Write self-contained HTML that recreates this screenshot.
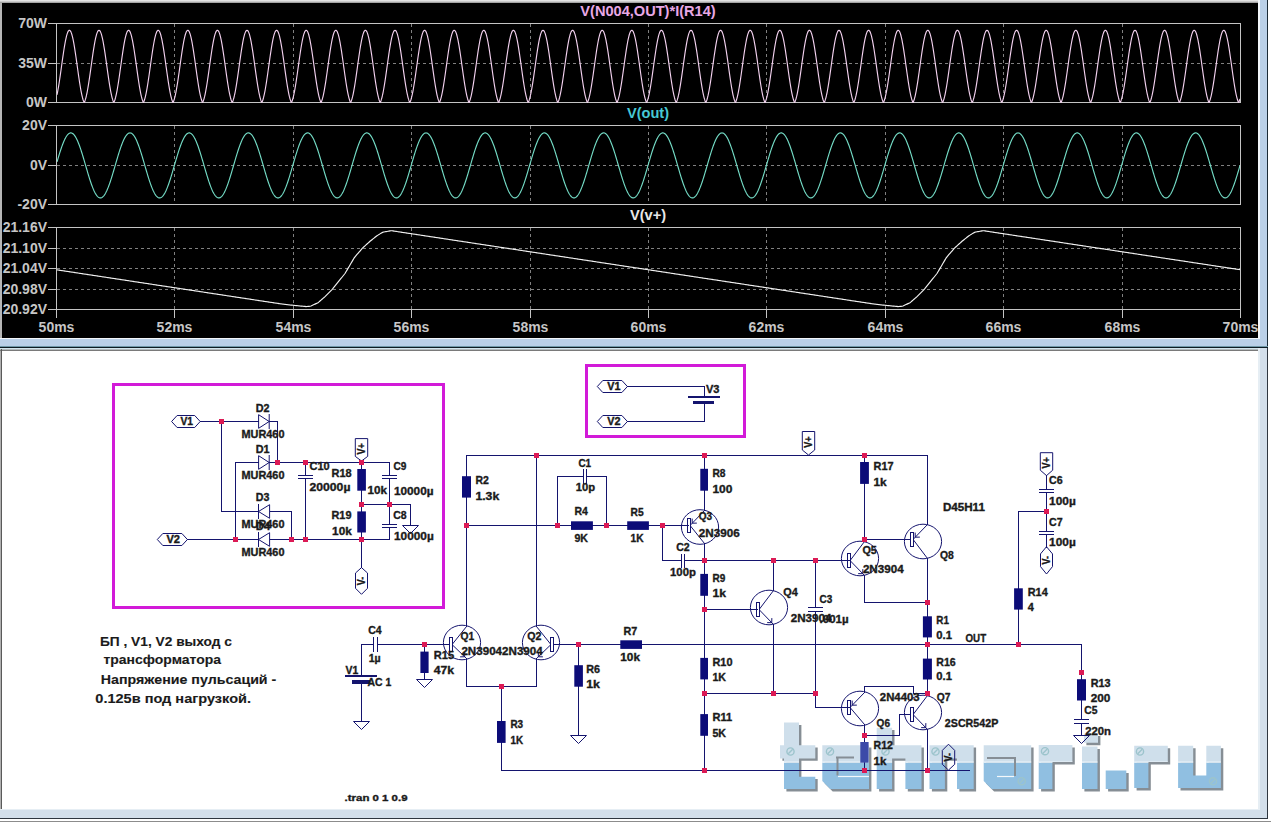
<!DOCTYPE html><html><head><meta charset="utf-8"><style>html,body{margin:0;padding:0;width:1271px;height:822px;overflow:hidden;background:#fff}svg{display:block;position:absolute;left:0;top:0;z-index:5;font-family:"Liberation Sans",sans-serif;font-weight:bold}</style></head><body>
<svg width="1271" height="822" viewBox="0 0 1271 822" shape-rendering="auto">
<rect x="0" y="0" width="1271" height="822" fill="#ffffff"/>
<rect x="0" y="0" width="1258" height="1" fill="#e2e2e2"/>
<rect x="0" y="1" width="1258" height="1" fill="#c9c9c9"/>
<rect x="0" y="2" width="1258" height="1" fill="#a4a4a4"/>
<rect x="0" y="3" width="2" height="335" fill="#b6b6b6"/>
<rect x="2" y="3" width="1256" height="335" fill="#000000"/>
<rect x="1258" y="0" width="2" height="348" fill="#f2f6fa"/>
<rect x="1260" y="0" width="7" height="348" fill="#bad0e8"/>
<rect x="1267" y="0" width="1" height="348" fill="#1a2a36"/>
<rect x="0" y="338" width="1260" height="1" fill="#f2f6fa"/>
<rect x="0" y="339" width="1267" height="7" fill="#bad0e8"/>
<rect x="0" y="346" width="1268" height="1" fill="#6f98a8"/>
<rect x="0" y="347" width="1268" height="1" fill="#0e1c24"/>
<rect x="0" y="348" width="1258" height="1" fill="#d2e6ee"/>
<rect x="0" y="349" width="1258" height="1" fill="#b4babd"/>
<rect x="0" y="350" width="1258" height="1" fill="#7a7a7a"/>
<rect x="0" y="351" width="1" height="458" fill="#b0b0b0"/>
<rect x="1" y="349" width="1" height="460" fill="#5a5a5a"/>
<rect x="1258" y="348" width="2" height="462" fill="#e6eef4"/>
<rect x="1260" y="348" width="7" height="470" fill="#d3dfeb"/>
<rect x="1267" y="348" width="1" height="471" fill="#2e3640"/>
<rect x="0" y="809" width="1260" height="1" fill="#e6eef4"/>
<rect x="0" y="810" width="1267" height="8" fill="#d3dfeb"/>
<rect x="0" y="818" width="1268" height="1" fill="#2e3640"/>
<rect x="0" y="821" width="1271" height="1" fill="#8c8c8c"/>
<line x1="57" y1="63.5" x2="1240" y2="63.5" stroke="#808080" stroke-width="1" stroke-dasharray="3 3"/>
<line x1="174.5" y1="24" x2="174.5" y2="102" stroke="#808080" stroke-width="1" stroke-dasharray="3 3"/>
<line x1="293.5" y1="24" x2="293.5" y2="102" stroke="#808080" stroke-width="1" stroke-dasharray="3 3"/>
<line x1="411.5" y1="24" x2="411.5" y2="102" stroke="#808080" stroke-width="1" stroke-dasharray="3 3"/>
<line x1="530.5" y1="24" x2="530.5" y2="102" stroke="#808080" stroke-width="1" stroke-dasharray="3 3"/>
<line x1="648.5" y1="24" x2="648.5" y2="102" stroke="#808080" stroke-width="1" stroke-dasharray="3 3"/>
<line x1="766.5" y1="24" x2="766.5" y2="102" stroke="#808080" stroke-width="1" stroke-dasharray="3 3"/>
<line x1="885.5" y1="24" x2="885.5" y2="102" stroke="#808080" stroke-width="1" stroke-dasharray="3 3"/>
<line x1="1003.5" y1="24" x2="1003.5" y2="102" stroke="#808080" stroke-width="1" stroke-dasharray="3 3"/>
<line x1="1122.5" y1="24" x2="1122.5" y2="102" stroke="#808080" stroke-width="1" stroke-dasharray="3 3"/>
<rect x="56" y="23" width="1185" height="1" fill="#c4c4c4"/>
<rect x="56" y="102" width="1185" height="1" fill="#c4c4c4"/>
<rect x="56" y="23" width="1" height="80" fill="#c4c4c4"/>
<rect x="1240" y="23" width="1" height="80" fill="#c4c4c4"/>
<rect x="48" y="23" width="8" height="1" fill="#c4c4c4"/>
<text transform="translate(47,28.3) scale(1,1.09)" font-size="14" fill="#c6c6c6" text-anchor="end">70W</text>
<rect x="48" y="63" width="8" height="1" fill="#c4c4c4"/>
<text transform="translate(47,68.3) scale(1,1.09)" font-size="14" fill="#c6c6c6" text-anchor="end">35W</text>
<rect x="48" y="102" width="8" height="1" fill="#c4c4c4"/>
<text transform="translate(47,107.3) scale(1,1.09)" font-size="14" fill="#c6c6c6" text-anchor="end">0W</text>
<text x="648" y="16" font-size="14.6" fill="#e8a8e6" text-anchor="middle">V(N004,OUT)*I(R14)</text>
<line x1="57" y1="165.5" x2="1240" y2="165.5" stroke="#808080" stroke-width="1" stroke-dasharray="3 3"/>
<line x1="174.5" y1="126" x2="174.5" y2="204" stroke="#808080" stroke-width="1" stroke-dasharray="3 3"/>
<line x1="293.5" y1="126" x2="293.5" y2="204" stroke="#808080" stroke-width="1" stroke-dasharray="3 3"/>
<line x1="411.5" y1="126" x2="411.5" y2="204" stroke="#808080" stroke-width="1" stroke-dasharray="3 3"/>
<line x1="530.5" y1="126" x2="530.5" y2="204" stroke="#808080" stroke-width="1" stroke-dasharray="3 3"/>
<line x1="648.5" y1="126" x2="648.5" y2="204" stroke="#808080" stroke-width="1" stroke-dasharray="3 3"/>
<line x1="766.5" y1="126" x2="766.5" y2="204" stroke="#808080" stroke-width="1" stroke-dasharray="3 3"/>
<line x1="885.5" y1="126" x2="885.5" y2="204" stroke="#808080" stroke-width="1" stroke-dasharray="3 3"/>
<line x1="1003.5" y1="126" x2="1003.5" y2="204" stroke="#808080" stroke-width="1" stroke-dasharray="3 3"/>
<line x1="1122.5" y1="126" x2="1122.5" y2="204" stroke="#808080" stroke-width="1" stroke-dasharray="3 3"/>
<rect x="56" y="125" width="1185" height="1" fill="#c4c4c4"/>
<rect x="56" y="204" width="1185" height="1" fill="#c4c4c4"/>
<rect x="56" y="125" width="1" height="80" fill="#c4c4c4"/>
<rect x="1240" y="125" width="1" height="80" fill="#c4c4c4"/>
<rect x="48" y="125" width="8" height="1" fill="#c4c4c4"/>
<text transform="translate(47,130.3) scale(1,1.09)" font-size="14" fill="#c6c6c6" text-anchor="end">20V</text>
<rect x="48" y="165" width="8" height="1" fill="#c4c4c4"/>
<text transform="translate(47,170.3) scale(1,1.09)" font-size="14" fill="#c6c6c6" text-anchor="end">0V</text>
<rect x="48" y="204" width="8" height="1" fill="#c4c4c4"/>
<text transform="translate(47,209.3) scale(1,1.09)" font-size="14" fill="#c6c6c6" text-anchor="end">-20V</text>
<text x="648" y="118" font-size="14.6" fill="#46c8d4" text-anchor="middle">V(out)</text>
<line x1="57" y1="248.5" x2="1240" y2="248.5" stroke="#808080" stroke-width="1" stroke-dasharray="3 3"/>
<line x1="57" y1="268.5" x2="1240" y2="268.5" stroke="#808080" stroke-width="1" stroke-dasharray="3 3"/>
<line x1="57" y1="289.5" x2="1240" y2="289.5" stroke="#808080" stroke-width="1" stroke-dasharray="3 3"/>
<line x1="174.5" y1="228" x2="174.5" y2="309" stroke="#808080" stroke-width="1" stroke-dasharray="3 3"/>
<line x1="293.5" y1="228" x2="293.5" y2="309" stroke="#808080" stroke-width="1" stroke-dasharray="3 3"/>
<line x1="411.5" y1="228" x2="411.5" y2="309" stroke="#808080" stroke-width="1" stroke-dasharray="3 3"/>
<line x1="530.5" y1="228" x2="530.5" y2="309" stroke="#808080" stroke-width="1" stroke-dasharray="3 3"/>
<line x1="648.5" y1="228" x2="648.5" y2="309" stroke="#808080" stroke-width="1" stroke-dasharray="3 3"/>
<line x1="766.5" y1="228" x2="766.5" y2="309" stroke="#808080" stroke-width="1" stroke-dasharray="3 3"/>
<line x1="885.5" y1="228" x2="885.5" y2="309" stroke="#808080" stroke-width="1" stroke-dasharray="3 3"/>
<line x1="1003.5" y1="228" x2="1003.5" y2="309" stroke="#808080" stroke-width="1" stroke-dasharray="3 3"/>
<line x1="1122.5" y1="228" x2="1122.5" y2="309" stroke="#808080" stroke-width="1" stroke-dasharray="3 3"/>
<rect x="56" y="227" width="1185" height="1" fill="#c4c4c4"/>
<rect x="56" y="309" width="1185" height="1" fill="#c4c4c4"/>
<rect x="56" y="227" width="1" height="83" fill="#c4c4c4"/>
<rect x="1240" y="227" width="1" height="83" fill="#c4c4c4"/>
<rect x="48" y="227" width="8" height="1" fill="#c4c4c4"/>
<text transform="translate(47,232.3) scale(1,1.09)" font-size="14" fill="#c6c6c6" text-anchor="end">21.16V</text>
<rect x="48" y="248" width="8" height="1" fill="#c4c4c4"/>
<text transform="translate(47,253.3) scale(1,1.09)" font-size="14" fill="#c6c6c6" text-anchor="end">21.10V</text>
<rect x="48" y="268" width="8" height="1" fill="#c4c4c4"/>
<text transform="translate(47,273.3) scale(1,1.09)" font-size="14" fill="#c6c6c6" text-anchor="end">21.04V</text>
<rect x="48" y="289" width="8" height="1" fill="#c4c4c4"/>
<text transform="translate(47,294.3) scale(1,1.09)" font-size="14" fill="#c6c6c6" text-anchor="end">20.98V</text>
<rect x="48" y="309" width="8" height="1" fill="#c4c4c4"/>
<text transform="translate(47,314.3) scale(1,1.09)" font-size="14" fill="#c6c6c6" text-anchor="end">20.92V</text>
<text x="648" y="220" font-size="14.6" fill="#e8e8e8" text-anchor="middle">V(v+)</text>
<rect x="56" y="309" width="1" height="9" fill="#c4c4c4"/>
<text transform="translate(56.5,332) scale(1,1.09)" font-size="14" fill="#c6c6c6" text-anchor="middle">50ms</text>
<rect x="174" y="309" width="1" height="9" fill="#c4c4c4"/>
<text transform="translate(174.5,332) scale(1,1.09)" font-size="14" fill="#c6c6c6" text-anchor="middle">52ms</text>
<rect x="293" y="309" width="1" height="9" fill="#c4c4c4"/>
<text transform="translate(293.5,332) scale(1,1.09)" font-size="14" fill="#c6c6c6" text-anchor="middle">54ms</text>
<rect x="411" y="309" width="1" height="9" fill="#c4c4c4"/>
<text transform="translate(411.5,332) scale(1,1.09)" font-size="14" fill="#c6c6c6" text-anchor="middle">56ms</text>
<rect x="530" y="309" width="1" height="9" fill="#c4c4c4"/>
<text transform="translate(530.5,332) scale(1,1.09)" font-size="14" fill="#c6c6c6" text-anchor="middle">58ms</text>
<rect x="648" y="309" width="1" height="9" fill="#c4c4c4"/>
<text transform="translate(648.5,332) scale(1,1.09)" font-size="14" fill="#c6c6c6" text-anchor="middle">60ms</text>
<rect x="766" y="309" width="1" height="9" fill="#c4c4c4"/>
<text transform="translate(766.5,332) scale(1,1.09)" font-size="14" fill="#c6c6c6" text-anchor="middle">62ms</text>
<rect x="885" y="309" width="1" height="9" fill="#c4c4c4"/>
<text transform="translate(885.5,332) scale(1,1.09)" font-size="14" fill="#c6c6c6" text-anchor="middle">64ms</text>
<rect x="1003" y="309" width="1" height="9" fill="#c4c4c4"/>
<text transform="translate(1003.5,332) scale(1,1.09)" font-size="14" fill="#c6c6c6" text-anchor="middle">66ms</text>
<rect x="1122" y="309" width="1" height="9" fill="#c4c4c4"/>
<text transform="translate(1122.5,332) scale(1,1.09)" font-size="14" fill="#c6c6c6" text-anchor="middle">68ms</text>
<rect x="1240" y="309" width="1" height="9" fill="#c4c4c4"/>
<text transform="translate(1240.5,332) scale(1,1.09)" font-size="14" fill="#c6c6c6" text-anchor="middle">70ms</text>
<clipPath id="c1"><rect x="57" y="24" width="1183" height="79"/></clipPath>
<g clip-path="url(#c1)">
<polyline points="57.00,94.78 57.50,92.36 58.00,89.70 58.50,86.82 59.00,83.75 59.50,80.51 60.00,77.14 60.50,73.66 61.00,70.11 61.50,66.53 62.00,62.95 62.50,59.39 63.00,55.91 63.50,52.53 64.00,49.28 64.50,46.20 65.00,43.32 65.50,40.67 66.00,38.27 66.50,36.16 67.00,34.34 67.50,32.84 68.00,31.67 68.50,30.85 69.00,30.39 69.50,30.28 70.00,30.53 70.50,31.14 71.00,32.10 71.50,33.40 72.00,35.03 72.50,36.97 73.00,39.20 73.50,41.70 74.00,44.45 74.50,47.41 75.00,50.56 75.50,53.86 76.00,57.29 76.50,60.81 77.00,64.38 77.50,67.97 78.00,71.54 78.50,75.06 79.00,78.50 79.50,81.82 80.00,85.00 80.50,88.00 81.00,90.79 81.50,93.36 82.00,95.68 82.50,97.73 83.00,99.49 83.50,100.96 84.00,102.12 84.50,101.91 85.00,100.69 85.50,99.16 86.00,97.34 86.50,95.24 87.00,92.87 87.50,90.25 88.00,87.41 88.50,84.38 89.00,81.17 89.50,77.82 90.00,74.36 90.50,70.83 91.00,67.25 91.50,63.66 92.00,60.10 92.50,56.60 93.00,53.19 93.50,49.92 94.00,46.80 94.50,43.88 95.00,41.18 95.50,38.73 96.00,36.56 96.50,34.68 97.00,33.11 97.50,31.88 98.00,30.99 98.50,30.45 99.00,30.27 99.50,30.45 100.00,30.99 100.50,31.88 101.00,33.11 101.50,34.68 102.00,36.56 102.50,38.73 103.00,41.18 103.50,43.88 104.00,46.80 104.50,49.92 105.00,53.19 105.50,56.60 106.00,60.10 106.50,63.66 107.00,67.25 107.50,70.83 108.00,74.36 108.50,77.82 109.00,81.17 109.50,84.38 110.00,87.41 110.50,90.25 111.00,92.87 111.50,95.24 112.00,97.34 112.50,99.16 113.00,100.69 113.50,101.91 114.00,102.12 114.50,100.96 115.00,99.49 115.50,97.73 116.00,95.68 116.50,93.36 117.00,90.79 117.50,88.00 118.00,85.00 118.50,81.82 119.00,78.50 119.50,75.06 120.00,71.54 120.50,67.97 121.00,64.38 121.50,60.81 122.00,57.29 122.50,53.86 123.00,50.56 123.50,47.41 124.00,44.45 124.50,41.70 125.00,39.20 125.50,36.97 126.00,35.03 126.50,33.40 127.00,32.10 127.50,31.14 128.00,30.53 128.50,30.28 129.00,30.39 129.50,30.85 130.00,31.67 130.50,32.84 131.00,34.34 131.50,36.16 132.00,38.27 132.50,40.67 133.00,43.32 133.50,46.20 134.00,49.28 134.50,52.53 135.00,55.91 135.50,59.39 136.00,62.95 136.50,66.53 137.00,70.11 137.50,73.66 138.00,77.14 138.50,80.51 139.00,83.75 139.50,86.82 140.00,89.70 140.50,92.36 141.00,94.78 141.50,96.94 142.00,98.82 142.50,100.41 143.00,101.69 143.50,102.32 144.00,101.22 144.50,99.81 145.00,98.10 145.50,96.11 146.00,93.85 146.50,91.33 147.00,88.57 147.50,85.61 148.00,82.47 148.50,79.18 149.00,75.76 149.50,72.25 150.00,68.68 150.50,65.09 151.00,61.52 151.50,57.99 152.00,54.54 152.50,51.21 153.00,48.03 153.50,45.02 154.00,42.23 154.50,39.68 155.00,37.39 155.50,35.39 156.00,33.70 156.50,32.33 157.00,31.30 157.50,30.62 158.00,30.30 158.50,30.34 159.00,30.73 159.50,31.48 160.00,32.58 160.50,34.01 161.00,35.77 161.50,37.83 162.00,40.17 162.50,42.77 163.00,45.61 163.50,48.65 164.00,51.86 164.50,55.22 165.00,58.69 165.50,62.23 166.00,65.81 166.50,69.40 167.00,72.96 167.50,76.45 168.00,79.85 168.50,83.11 169.00,86.22 169.50,89.14 170.00,91.85 170.50,94.32 171.00,96.53 171.50,98.47 172.00,100.12 172.50,101.46 173.00,102.50 173.50,101.46 174.00,100.12 174.50,98.47 175.00,96.53 175.50,94.32 176.00,91.85 176.50,89.14 177.00,86.22 177.50,83.11 178.00,79.85 178.50,76.45 179.00,72.96 179.50,69.40 180.00,65.81 180.50,62.23 181.00,58.69 181.50,55.22 182.00,51.86 182.50,48.65 183.00,45.61 183.50,42.77 184.00,40.17 184.50,37.83 185.00,35.77 185.50,34.01 186.00,32.58 186.50,31.48 187.00,30.73 187.50,30.34 188.00,30.30 188.50,30.62 189.00,31.30 189.50,32.33 190.00,33.70 190.50,35.39 191.00,37.39 191.50,39.68 192.00,42.23 192.50,45.02 193.00,48.03 193.50,51.21 194.00,54.54 194.50,57.99 195.00,61.52 195.50,65.09 196.00,68.68 196.50,72.25 197.00,75.76 197.50,79.18 198.00,82.47 198.50,85.61 199.00,88.57 199.50,91.33 200.00,93.85 200.50,96.11 201.00,98.10 201.50,99.81 202.00,101.22 202.50,102.32 203.00,101.69 203.50,100.41 204.00,98.82 204.50,96.94 205.00,94.78 205.50,92.36 206.00,89.70 206.50,86.82 207.00,83.75 207.50,80.51 208.00,77.14 208.50,73.66 209.00,70.11 209.50,66.53 210.00,62.95 210.50,59.39 211.00,55.91 211.50,52.53 212.00,49.28 212.50,46.20 213.00,43.32 213.50,40.67 214.00,38.27 214.50,36.16 215.00,34.34 215.50,32.84 216.00,31.67 216.50,30.85 217.00,30.39 217.50,30.28 218.00,30.53 218.50,31.14 219.00,32.10 219.50,33.40 220.00,35.03 220.50,36.97 221.00,39.20 221.50,41.70 222.00,44.45 222.50,47.41 223.00,50.56 223.50,53.86 224.00,57.29 224.50,60.81 225.00,64.38 225.50,67.97 226.00,71.54 226.50,75.06 227.00,78.50 227.50,81.82 228.00,85.00 228.50,88.00 229.00,90.79 229.50,93.36 230.00,95.68 230.50,97.73 231.00,99.49 231.50,100.96 232.00,102.12 232.50,101.91 233.00,100.69 233.50,99.16 234.00,97.34 234.50,95.24 235.00,92.87 235.50,90.25 236.00,87.41 236.50,84.38 237.00,81.17 237.50,77.82 238.00,74.36 238.50,70.83 239.00,67.25 239.50,63.66 240.00,60.10 240.50,56.60 241.00,53.19 241.50,49.92 242.00,46.80 242.50,43.88 243.00,41.18 243.50,38.73 244.00,36.56 244.50,34.68 245.00,33.11 245.50,31.88 246.00,30.99 246.50,30.45 247.00,30.27 247.50,30.45 248.00,30.99 248.50,31.88 249.00,33.11 249.50,34.68 250.00,36.56 250.50,38.73 251.00,41.18 251.50,43.88 252.00,46.80 252.50,49.92 253.00,53.19 253.50,56.60 254.00,60.10 254.50,63.66 255.00,67.25 255.50,70.83 256.00,74.36 256.50,77.82 257.00,81.17 257.50,84.38 258.00,87.41 258.50,90.25 259.00,92.87 259.50,95.24 260.00,97.34 260.50,99.16 261.00,100.69 261.50,101.91 262.00,102.12 262.50,100.96 263.00,99.49 263.50,97.73 264.00,95.68 264.50,93.36 265.00,90.79 265.50,88.00 266.00,85.00 266.50,81.82 267.00,78.50 267.50,75.06 268.00,71.54 268.50,67.97 269.00,64.38 269.50,60.81 270.00,57.29 270.50,53.86 271.00,50.56 271.50,47.41 272.00,44.45 272.50,41.70 273.00,39.20 273.50,36.97 274.00,35.03 274.50,33.40 275.00,32.10 275.50,31.14 276.00,30.53 276.50,30.28 277.00,30.39 277.50,30.85 278.00,31.67 278.50,32.84 279.00,34.34 279.50,36.16 280.00,38.27 280.50,40.67 281.00,43.32 281.50,46.20 282.00,49.28 282.50,52.53 283.00,55.91 283.50,59.39 284.00,62.95 284.50,66.53 285.00,70.11 285.50,73.66 286.00,77.14 286.50,80.51 287.00,83.75 287.50,86.82 288.00,89.70 288.50,92.36 289.00,94.78 289.50,96.94 290.00,98.82 290.50,100.41 291.00,101.69 291.50,102.32 292.00,101.22 292.50,99.81 293.00,98.10 293.50,96.11 294.00,93.85 294.50,91.33 295.00,88.57 295.50,85.61 296.00,82.47 296.50,79.18 297.00,75.76 297.50,72.25 298.00,68.68 298.50,65.09 299.00,61.52 299.50,57.99 300.00,54.54 300.50,51.21 301.00,48.03 301.50,45.02 302.00,42.23 302.50,39.68 303.00,37.39 303.50,35.39 304.00,33.70 304.50,32.33 305.00,31.30 305.50,30.62 306.00,30.30 306.50,30.34 307.00,30.73 307.50,31.48 308.00,32.58 308.50,34.01 309.00,35.77 309.50,37.83 310.00,40.17 310.50,42.77 311.00,45.61 311.50,48.65 312.00,51.86 312.50,55.22 313.00,58.69 313.50,62.23 314.00,65.81 314.50,69.40 315.00,72.96 315.50,76.45 316.00,79.85 316.50,83.11 317.00,86.22 317.50,89.14 318.00,91.85 318.50,94.32 319.00,96.53 319.50,98.47 320.00,100.12 320.50,101.46 321.00,102.50 321.50,101.46 322.00,100.12 322.50,98.47 323.00,96.53 323.50,94.32 324.00,91.85 324.50,89.14 325.00,86.22 325.50,83.11 326.00,79.85 326.50,76.45 327.00,72.96 327.50,69.40 328.00,65.81 328.50,62.23 329.00,58.69 329.50,55.22 330.00,51.86 330.50,48.65 331.00,45.61 331.50,42.77 332.00,40.17 332.50,37.83 333.00,35.77 333.50,34.01 334.00,32.58 334.50,31.48 335.00,30.73 335.50,30.34 336.00,30.30 336.50,30.62 337.00,31.30 337.50,32.33 338.00,33.70 338.50,35.39 339.00,37.39 339.50,39.68 340.00,42.23 340.50,45.02 341.00,48.03 341.50,51.21 342.00,54.54 342.50,57.99 343.00,61.52 343.50,65.09 344.00,68.68 344.50,72.25 345.00,75.76 345.50,79.18 346.00,82.47 346.50,85.61 347.00,88.57 347.50,91.33 348.00,93.85 348.50,96.11 349.00,98.10 349.50,99.81 350.00,101.22 350.50,102.32 351.00,101.69 351.50,100.41 352.00,98.82 352.50,96.94 353.00,94.78 353.50,92.36 354.00,89.70 354.50,86.82 355.00,83.75 355.50,80.51 356.00,77.14 356.50,73.66 357.00,70.11 357.50,66.53 358.00,62.95 358.50,59.39 359.00,55.91 359.50,52.53 360.00,49.28 360.50,46.20 361.00,43.32 361.50,40.67 362.00,38.27 362.50,36.16 363.00,34.34 363.50,32.84 364.00,31.67 364.50,30.85 365.00,30.39 365.50,30.28 366.00,30.53 366.50,31.14 367.00,32.10 367.50,33.40 368.00,35.03 368.50,36.97 369.00,39.20 369.50,41.70 370.00,44.45 370.50,47.41 371.00,50.56 371.50,53.86 372.00,57.29 372.50,60.81 373.00,64.38 373.50,67.97 374.00,71.54 374.50,75.06 375.00,78.50 375.50,81.82 376.00,85.00 376.50,88.00 377.00,90.79 377.50,93.36 378.00,95.68 378.50,97.73 379.00,99.49 379.50,100.96 380.00,102.12 380.50,101.91 381.00,100.69 381.50,99.16 382.00,97.34 382.50,95.24 383.00,92.87 383.50,90.25 384.00,87.41 384.50,84.38 385.00,81.17 385.50,77.82 386.00,74.36 386.50,70.83 387.00,67.25 387.50,63.66 388.00,60.10 388.50,56.60 389.00,53.19 389.50,49.92 390.00,46.80 390.50,43.88 391.00,41.18 391.50,38.73 392.00,36.56 392.50,34.68 393.00,33.11 393.50,31.88 394.00,30.99 394.50,30.45 395.00,30.27 395.50,30.45 396.00,30.99 396.50,31.88 397.00,33.11 397.50,34.68 398.00,36.56 398.50,38.73 399.00,41.18 399.50,43.88 400.00,46.80 400.50,49.92 401.00,53.19 401.50,56.60 402.00,60.10 402.50,63.66 403.00,67.25 403.50,70.83 404.00,74.36 404.50,77.82 405.00,81.17 405.50,84.38 406.00,87.41 406.50,90.25 407.00,92.87 407.50,95.24 408.00,97.34 408.50,99.16 409.00,100.69 409.50,101.91 410.00,102.12 410.50,100.96 411.00,99.49 411.50,97.73 412.00,95.68 412.50,93.36 413.00,90.79 413.50,88.00 414.00,85.00 414.50,81.82 415.00,78.50 415.50,75.06 416.00,71.54 416.50,67.97 417.00,64.38 417.50,60.81 418.00,57.29 418.50,53.86 419.00,50.56 419.50,47.41 420.00,44.45 420.50,41.70 421.00,39.20 421.50,36.97 422.00,35.03 422.50,33.40 423.00,32.10 423.50,31.14 424.00,30.53 424.50,30.28 425.00,30.39 425.50,30.85 426.00,31.67 426.50,32.84 427.00,34.34 427.50,36.16 428.00,38.27 428.50,40.67 429.00,43.32 429.50,46.20 430.00,49.28 430.50,52.53 431.00,55.91 431.50,59.39 432.00,62.95 432.50,66.53 433.00,70.11 433.50,73.66 434.00,77.14 434.50,80.51 435.00,83.75 435.50,86.82 436.00,89.70 436.50,92.36 437.00,94.78 437.50,96.94 438.00,98.82 438.50,100.41 439.00,101.69 439.50,102.32 440.00,101.22 440.50,99.81 441.00,98.10 441.50,96.11 442.00,93.85 442.50,91.33 443.00,88.57 443.50,85.61 444.00,82.47 444.50,79.18 445.00,75.76 445.50,72.25 446.00,68.68 446.50,65.09 447.00,61.52 447.50,57.99 448.00,54.54 448.50,51.21 449.00,48.03 449.50,45.02 450.00,42.23 450.50,39.68 451.00,37.39 451.50,35.39 452.00,33.70 452.50,32.33 453.00,31.30 453.50,30.62 454.00,30.30 454.50,30.34 455.00,30.73 455.50,31.48 456.00,32.58 456.50,34.01 457.00,35.77 457.50,37.83 458.00,40.17 458.50,42.77 459.00,45.61 459.50,48.65 460.00,51.86 460.50,55.22 461.00,58.69 461.50,62.23 462.00,65.81 462.50,69.40 463.00,72.96 463.50,76.45 464.00,79.85 464.50,83.11 465.00,86.22 465.50,89.14 466.00,91.85 466.50,94.32 467.00,96.53 467.50,98.47 468.00,100.12 468.50,101.46 469.00,102.50 469.50,101.46 470.00,100.12 470.50,98.47 471.00,96.53 471.50,94.32 472.00,91.85 472.50,89.14 473.00,86.22 473.50,83.11 474.00,79.85 474.50,76.45 475.00,72.96 475.50,69.40 476.00,65.81 476.50,62.23 477.00,58.69 477.50,55.22 478.00,51.86 478.50,48.65 479.00,45.61 479.50,42.77 480.00,40.17 480.50,37.83 481.00,35.77 481.50,34.01 482.00,32.58 482.50,31.48 483.00,30.73 483.50,30.34 484.00,30.30 484.50,30.62 485.00,31.30 485.50,32.33 486.00,33.70 486.50,35.39 487.00,37.39 487.50,39.68 488.00,42.23 488.50,45.02 489.00,48.03 489.50,51.21 490.00,54.54 490.50,57.99 491.00,61.52 491.50,65.09 492.00,68.68 492.50,72.25 493.00,75.76 493.50,79.18 494.00,82.47 494.50,85.61 495.00,88.57 495.50,91.33 496.00,93.85 496.50,96.11 497.00,98.10 497.50,99.81 498.00,101.22 498.50,102.32 499.00,101.69 499.50,100.41 500.00,98.82 500.50,96.94 501.00,94.78 501.50,92.36 502.00,89.70 502.50,86.82 503.00,83.75 503.50,80.51 504.00,77.14 504.50,73.66 505.00,70.11 505.50,66.53 506.00,62.95 506.50,59.39 507.00,55.91 507.50,52.53 508.00,49.28 508.50,46.20 509.00,43.32 509.50,40.67 510.00,38.27 510.50,36.16 511.00,34.34 511.50,32.84 512.00,31.67 512.50,30.85 513.00,30.39 513.50,30.28 514.00,30.53 514.50,31.14 515.00,32.10 515.50,33.40 516.00,35.03 516.50,36.97 517.00,39.20 517.50,41.70 518.00,44.45 518.50,47.41 519.00,50.56 519.50,53.86 520.00,57.29 520.50,60.81 521.00,64.38 521.50,67.97 522.00,71.54 522.50,75.06 523.00,78.50 523.50,81.82 524.00,85.00 524.50,88.00 525.00,90.79 525.50,93.36 526.00,95.68 526.50,97.73 527.00,99.49 527.50,100.96 528.00,102.12 528.50,101.91 529.00,100.69 529.50,99.16 530.00,97.34 530.50,95.24 531.00,92.87 531.50,90.25 532.00,87.41 532.50,84.38 533.00,81.17 533.50,77.82 534.00,74.36 534.50,70.83 535.00,67.25 535.50,63.66 536.00,60.10 536.50,56.60 537.00,53.19 537.50,49.92 538.00,46.80 538.50,43.88 539.00,41.18 539.50,38.73 540.00,36.56 540.50,34.68 541.00,33.11 541.50,31.88 542.00,30.99 542.50,30.45 543.00,30.27 543.50,30.45 544.00,30.99 544.50,31.88 545.00,33.11 545.50,34.68 546.00,36.56 546.50,38.73 547.00,41.18 547.50,43.88 548.00,46.80 548.50,49.92 549.00,53.19 549.50,56.60 550.00,60.10 550.50,63.66 551.00,67.25 551.50,70.83 552.00,74.36 552.50,77.82 553.00,81.17 553.50,84.38 554.00,87.41 554.50,90.25 555.00,92.87 555.50,95.24 556.00,97.34 556.50,99.16 557.00,100.69 557.50,101.91 558.00,102.12 558.50,100.96 559.00,99.49 559.50,97.73 560.00,95.68 560.50,93.36 561.00,90.79 561.50,88.00 562.00,85.00 562.50,81.82 563.00,78.50 563.50,75.06 564.00,71.54 564.50,67.97 565.00,64.38 565.50,60.81 566.00,57.29 566.50,53.86 567.00,50.56 567.50,47.41 568.00,44.45 568.50,41.70 569.00,39.20 569.50,36.97 570.00,35.03 570.50,33.40 571.00,32.10 571.50,31.14 572.00,30.53 572.50,30.28 573.00,30.39 573.50,30.85 574.00,31.67 574.50,32.84 575.00,34.34 575.50,36.16 576.00,38.27 576.50,40.67 577.00,43.32 577.50,46.20 578.00,49.28 578.50,52.53 579.00,55.91 579.50,59.39 580.00,62.95 580.50,66.53 581.00,70.11 581.50,73.66 582.00,77.14 582.50,80.51 583.00,83.75 583.50,86.82 584.00,89.70 584.50,92.36 585.00,94.78 585.50,96.94 586.00,98.82 586.50,100.41 587.00,101.69 587.50,102.32 588.00,101.22 588.50,99.81 589.00,98.10 589.50,96.11 590.00,93.85 590.50,91.33 591.00,88.57 591.50,85.61 592.00,82.47 592.50,79.18 593.00,75.76 593.50,72.25 594.00,68.68 594.50,65.09 595.00,61.52 595.50,57.99 596.00,54.54 596.50,51.21 597.00,48.03 597.50,45.02 598.00,42.23 598.50,39.68 599.00,37.39 599.50,35.39 600.00,33.70 600.50,32.33 601.00,31.30 601.50,30.62 602.00,30.30 602.50,30.34 603.00,30.73 603.50,31.48 604.00,32.58 604.50,34.01 605.00,35.77 605.50,37.83 606.00,40.17 606.50,42.77 607.00,45.61 607.50,48.65 608.00,51.86 608.50,55.22 609.00,58.69 609.50,62.23 610.00,65.81 610.50,69.40 611.00,72.96 611.50,76.45 612.00,79.85 612.50,83.11 613.00,86.22 613.50,89.14 614.00,91.85 614.50,94.32 615.00,96.53 615.50,98.47 616.00,100.12 616.50,101.46 617.00,102.50 617.50,101.46 618.00,100.12 618.50,98.47 619.00,96.53 619.50,94.32 620.00,91.85 620.50,89.14 621.00,86.22 621.50,83.11 622.00,79.85 622.50,76.45 623.00,72.96 623.50,69.40 624.00,65.81 624.50,62.23 625.00,58.69 625.50,55.22 626.00,51.86 626.50,48.65 627.00,45.61 627.50,42.77 628.00,40.17 628.50,37.83 629.00,35.77 629.50,34.01 630.00,32.58 630.50,31.48 631.00,30.73 631.50,30.34 632.00,30.30 632.50,30.62 633.00,31.30 633.50,32.33 634.00,33.70 634.50,35.39 635.00,37.39 635.50,39.68 636.00,42.23 636.50,45.02 637.00,48.03 637.50,51.21 638.00,54.54 638.50,57.99 639.00,61.52 639.50,65.09 640.00,68.68 640.50,72.25 641.00,75.76 641.50,79.18 642.00,82.47 642.50,85.61 643.00,88.57 643.50,91.33 644.00,93.85 644.50,96.11 645.00,98.10 645.50,99.81 646.00,101.22 646.50,102.32 647.00,101.69 647.50,100.41 648.00,98.82 648.50,96.94 649.00,94.78 649.50,92.36 650.00,89.70 650.50,86.82 651.00,83.75 651.50,80.51 652.00,77.14 652.50,73.66 653.00,70.11 653.50,66.53 654.00,62.95 654.50,59.39 655.00,55.91 655.50,52.53 656.00,49.28 656.50,46.20 657.00,43.32 657.50,40.67 658.00,38.27 658.50,36.16 659.00,34.34 659.50,32.84 660.00,31.67 660.50,30.85 661.00,30.39 661.50,30.28 662.00,30.53 662.50,31.14 663.00,32.10 663.50,33.40 664.00,35.03 664.50,36.97 665.00,39.20 665.50,41.70 666.00,44.45 666.50,47.41 667.00,50.56 667.50,53.86 668.00,57.29 668.50,60.81 669.00,64.38 669.50,67.97 670.00,71.54 670.50,75.06 671.00,78.50 671.50,81.82 672.00,85.00 672.50,88.00 673.00,90.79 673.50,93.36 674.00,95.68 674.50,97.73 675.00,99.49 675.50,100.96 676.00,102.12 676.50,101.91 677.00,100.69 677.50,99.16 678.00,97.34 678.50,95.24 679.00,92.87 679.50,90.25 680.00,87.41 680.50,84.38 681.00,81.17 681.50,77.82 682.00,74.36 682.50,70.83 683.00,67.25 683.50,63.66 684.00,60.10 684.50,56.60 685.00,53.19 685.50,49.92 686.00,46.80 686.50,43.88 687.00,41.18 687.50,38.73 688.00,36.56 688.50,34.68 689.00,33.11 689.50,31.88 690.00,30.99 690.50,30.45 691.00,30.27 691.50,30.45 692.00,30.99 692.50,31.88 693.00,33.11 693.50,34.68 694.00,36.56 694.50,38.73 695.00,41.18 695.50,43.88 696.00,46.80 696.50,49.92 697.00,53.19 697.50,56.60 698.00,60.10 698.50,63.66 699.00,67.25 699.50,70.83 700.00,74.36 700.50,77.82 701.00,81.17 701.50,84.38 702.00,87.41 702.50,90.25 703.00,92.87 703.50,95.24 704.00,97.34 704.50,99.16 705.00,100.69 705.50,101.91 706.00,102.12 706.50,100.96 707.00,99.49 707.50,97.73 708.00,95.68 708.50,93.36 709.00,90.79 709.50,88.00 710.00,85.00 710.50,81.82 711.00,78.50 711.50,75.06 712.00,71.54 712.50,67.97 713.00,64.38 713.50,60.81 714.00,57.29 714.50,53.86 715.00,50.56 715.50,47.41 716.00,44.45 716.50,41.70 717.00,39.20 717.50,36.97 718.00,35.03 718.50,33.40 719.00,32.10 719.50,31.14 720.00,30.53 720.50,30.28 721.00,30.39 721.50,30.85 722.00,31.67 722.50,32.84 723.00,34.34 723.50,36.16 724.00,38.27 724.50,40.67 725.00,43.32 725.50,46.20 726.00,49.28 726.50,52.53 727.00,55.91 727.50,59.39 728.00,62.95 728.50,66.53 729.00,70.11 729.50,73.66 730.00,77.14 730.50,80.51 731.00,83.75 731.50,86.82 732.00,89.70 732.50,92.36 733.00,94.78 733.50,96.94 734.00,98.82 734.50,100.41 735.00,101.69 735.50,102.32 736.00,101.22 736.50,99.81 737.00,98.10 737.50,96.11 738.00,93.85 738.50,91.33 739.00,88.57 739.50,85.61 740.00,82.47 740.50,79.18 741.00,75.76 741.50,72.25 742.00,68.68 742.50,65.09 743.00,61.52 743.50,57.99 744.00,54.54 744.50,51.21 745.00,48.03 745.50,45.02 746.00,42.23 746.50,39.68 747.00,37.39 747.50,35.39 748.00,33.70 748.50,32.33 749.00,31.30 749.50,30.62 750.00,30.30 750.50,30.34 751.00,30.73 751.50,31.48 752.00,32.58 752.50,34.01 753.00,35.77 753.50,37.83 754.00,40.17 754.50,42.77 755.00,45.61 755.50,48.65 756.00,51.86 756.50,55.22 757.00,58.69 757.50,62.23 758.00,65.81 758.50,69.40 759.00,72.96 759.50,76.45 760.00,79.85 760.50,83.11 761.00,86.22 761.50,89.14 762.00,91.85 762.50,94.32 763.00,96.53 763.50,98.47 764.00,100.12 764.50,101.46 765.00,102.50 765.50,101.46 766.00,100.12 766.50,98.47 767.00,96.53 767.50,94.32 768.00,91.85 768.50,89.14 769.00,86.22 769.50,83.11 770.00,79.85 770.50,76.45 771.00,72.96 771.50,69.40 772.00,65.81 772.50,62.23 773.00,58.69 773.50,55.22 774.00,51.86 774.50,48.65 775.00,45.61 775.50,42.77 776.00,40.17 776.50,37.83 777.00,35.77 777.50,34.01 778.00,32.58 778.50,31.48 779.00,30.73 779.50,30.34 780.00,30.30 780.50,30.62 781.00,31.30 781.50,32.33 782.00,33.70 782.50,35.39 783.00,37.39 783.50,39.68 784.00,42.23 784.50,45.02 785.00,48.03 785.50,51.21 786.00,54.54 786.50,57.99 787.00,61.52 787.50,65.09 788.00,68.68 788.50,72.25 789.00,75.76 789.50,79.18 790.00,82.47 790.50,85.61 791.00,88.57 791.50,91.33 792.00,93.85 792.50,96.11 793.00,98.10 793.50,99.81 794.00,101.22 794.50,102.32 795.00,101.69 795.50,100.41 796.00,98.82 796.50,96.94 797.00,94.78 797.50,92.36 798.00,89.70 798.50,86.82 799.00,83.75 799.50,80.51 800.00,77.14 800.50,73.66 801.00,70.11 801.50,66.53 802.00,62.95 802.50,59.39 803.00,55.91 803.50,52.53 804.00,49.28 804.50,46.20 805.00,43.32 805.50,40.67 806.00,38.27 806.50,36.16 807.00,34.34 807.50,32.84 808.00,31.67 808.50,30.85 809.00,30.39 809.50,30.28 810.00,30.53 810.50,31.14 811.00,32.10 811.50,33.40 812.00,35.03 812.50,36.97 813.00,39.20 813.50,41.70 814.00,44.45 814.50,47.41 815.00,50.56 815.50,53.86 816.00,57.29 816.50,60.81 817.00,64.38 817.50,67.97 818.00,71.54 818.50,75.06 819.00,78.50 819.50,81.82 820.00,85.00 820.50,88.00 821.00,90.79 821.50,93.36 822.00,95.68 822.50,97.73 823.00,99.49 823.50,100.96 824.00,102.12 824.50,101.91 825.00,100.69 825.50,99.16 826.00,97.34 826.50,95.24 827.00,92.87 827.50,90.25 828.00,87.41 828.50,84.38 829.00,81.17 829.50,77.82 830.00,74.36 830.50,70.83 831.00,67.25 831.50,63.66 832.00,60.10 832.50,56.60 833.00,53.19 833.50,49.92 834.00,46.80 834.50,43.88 835.00,41.18 835.50,38.73 836.00,36.56 836.50,34.68 837.00,33.11 837.50,31.88 838.00,30.99 838.50,30.45 839.00,30.27 839.50,30.45 840.00,30.99 840.50,31.88 841.00,33.11 841.50,34.68 842.00,36.56 842.50,38.73 843.00,41.18 843.50,43.88 844.00,46.80 844.50,49.92 845.00,53.19 845.50,56.60 846.00,60.10 846.50,63.66 847.00,67.25 847.50,70.83 848.00,74.36 848.50,77.82 849.00,81.17 849.50,84.38 850.00,87.41 850.50,90.25 851.00,92.87 851.50,95.24 852.00,97.34 852.50,99.16 853.00,100.69 853.50,101.91 854.00,102.12 854.50,100.96 855.00,99.49 855.50,97.73 856.00,95.68 856.50,93.36 857.00,90.79 857.50,88.00 858.00,85.00 858.50,81.82 859.00,78.50 859.50,75.06 860.00,71.54 860.50,67.97 861.00,64.38 861.50,60.81 862.00,57.29 862.50,53.86 863.00,50.56 863.50,47.41 864.00,44.45 864.50,41.70 865.00,39.20 865.50,36.97 866.00,35.03 866.50,33.40 867.00,32.10 867.50,31.14 868.00,30.53 868.50,30.28 869.00,30.39 869.50,30.85 870.00,31.67 870.50,32.84 871.00,34.34 871.50,36.16 872.00,38.27 872.50,40.67 873.00,43.32 873.50,46.20 874.00,49.28 874.50,52.53 875.00,55.91 875.50,59.39 876.00,62.95 876.50,66.53 877.00,70.11 877.50,73.66 878.00,77.14 878.50,80.51 879.00,83.75 879.50,86.82 880.00,89.70 880.50,92.36 881.00,94.78 881.50,96.94 882.00,98.82 882.50,100.41 883.00,101.69 883.50,102.32 884.00,101.22 884.50,99.81 885.00,98.10 885.50,96.11 886.00,93.85 886.50,91.33 887.00,88.57 887.50,85.61 888.00,82.47 888.50,79.18 889.00,75.76 889.50,72.25 890.00,68.68 890.50,65.09 891.00,61.52 891.50,57.99 892.00,54.54 892.50,51.21 893.00,48.03 893.50,45.02 894.00,42.23 894.50,39.68 895.00,37.39 895.50,35.39 896.00,33.70 896.50,32.33 897.00,31.30 897.50,30.62 898.00,30.30 898.50,30.34 899.00,30.73 899.50,31.48 900.00,32.58 900.50,34.01 901.00,35.77 901.50,37.83 902.00,40.17 902.50,42.77 903.00,45.61 903.50,48.65 904.00,51.86 904.50,55.22 905.00,58.69 905.50,62.23 906.00,65.81 906.50,69.40 907.00,72.96 907.50,76.45 908.00,79.85 908.50,83.11 909.00,86.22 909.50,89.14 910.00,91.85 910.50,94.32 911.00,96.53 911.50,98.47 912.00,100.12 912.50,101.46 913.00,102.50 913.50,101.46 914.00,100.12 914.50,98.47 915.00,96.53 915.50,94.32 916.00,91.85 916.50,89.14 917.00,86.22 917.50,83.11 918.00,79.85 918.50,76.45 919.00,72.96 919.50,69.40 920.00,65.81 920.50,62.23 921.00,58.69 921.50,55.22 922.00,51.86 922.50,48.65 923.00,45.61 923.50,42.77 924.00,40.17 924.50,37.83 925.00,35.77 925.50,34.01 926.00,32.58 926.50,31.48 927.00,30.73 927.50,30.34 928.00,30.30 928.50,30.62 929.00,31.30 929.50,32.33 930.00,33.70 930.50,35.39 931.00,37.39 931.50,39.68 932.00,42.23 932.50,45.02 933.00,48.03 933.50,51.21 934.00,54.54 934.50,57.99 935.00,61.52 935.50,65.09 936.00,68.68 936.50,72.25 937.00,75.76 937.50,79.18 938.00,82.47 938.50,85.61 939.00,88.57 939.50,91.33 940.00,93.85 940.50,96.11 941.00,98.10 941.50,99.81 942.00,101.22 942.50,102.32 943.00,101.69 943.50,100.41 944.00,98.82 944.50,96.94 945.00,94.78 945.50,92.36 946.00,89.70 946.50,86.82 947.00,83.75 947.50,80.51 948.00,77.14 948.50,73.66 949.00,70.11 949.50,66.53 950.00,62.95 950.50,59.39 951.00,55.91 951.50,52.53 952.00,49.28 952.50,46.20 953.00,43.32 953.50,40.67 954.00,38.27 954.50,36.16 955.00,34.34 955.50,32.84 956.00,31.67 956.50,30.85 957.00,30.39 957.50,30.28 958.00,30.53 958.50,31.14 959.00,32.10 959.50,33.40 960.00,35.03 960.50,36.97 961.00,39.20 961.50,41.70 962.00,44.45 962.50,47.41 963.00,50.56 963.50,53.86 964.00,57.29 964.50,60.81 965.00,64.38 965.50,67.97 966.00,71.54 966.50,75.06 967.00,78.50 967.50,81.82 968.00,85.00 968.50,88.00 969.00,90.79 969.50,93.36 970.00,95.68 970.50,97.73 971.00,99.49 971.50,100.96 972.00,102.12 972.50,101.91 973.00,100.69 973.50,99.16 974.00,97.34 974.50,95.24 975.00,92.87 975.50,90.25 976.00,87.41 976.50,84.38 977.00,81.17 977.50,77.82 978.00,74.36 978.50,70.83 979.00,67.25 979.50,63.66 980.00,60.10 980.50,56.60 981.00,53.19 981.50,49.92 982.00,46.80 982.50,43.88 983.00,41.18 983.50,38.73 984.00,36.56 984.50,34.68 985.00,33.11 985.50,31.88 986.00,30.99 986.50,30.45 987.00,30.27 987.50,30.45 988.00,30.99 988.50,31.88 989.00,33.11 989.50,34.68 990.00,36.56 990.50,38.73 991.00,41.18 991.50,43.88 992.00,46.80 992.50,49.92 993.00,53.19 993.50,56.60 994.00,60.10 994.50,63.66 995.00,67.25 995.50,70.83 996.00,74.36 996.50,77.82 997.00,81.17 997.50,84.38 998.00,87.41 998.50,90.25 999.00,92.87 999.50,95.24 1000.00,97.34 1000.50,99.16 1001.00,100.69 1001.50,101.91 1002.00,102.12 1002.50,100.96 1003.00,99.49 1003.50,97.73 1004.00,95.68 1004.50,93.36 1005.00,90.79 1005.50,88.00 1006.00,85.00 1006.50,81.82 1007.00,78.50 1007.50,75.06 1008.00,71.54 1008.50,67.97 1009.00,64.38 1009.50,60.81 1010.00,57.29 1010.50,53.86 1011.00,50.56 1011.50,47.41 1012.00,44.45 1012.50,41.70 1013.00,39.20 1013.50,36.97 1014.00,35.03 1014.50,33.40 1015.00,32.10 1015.50,31.14 1016.00,30.53 1016.50,30.28 1017.00,30.39 1017.50,30.85 1018.00,31.67 1018.50,32.84 1019.00,34.34 1019.50,36.16 1020.00,38.27 1020.50,40.67 1021.00,43.32 1021.50,46.20 1022.00,49.28 1022.50,52.53 1023.00,55.91 1023.50,59.39 1024.00,62.95 1024.50,66.53 1025.00,70.11 1025.50,73.66 1026.00,77.14 1026.50,80.51 1027.00,83.75 1027.50,86.82 1028.00,89.70 1028.50,92.36 1029.00,94.78 1029.50,96.94 1030.00,98.82 1030.50,100.41 1031.00,101.69 1031.50,102.32 1032.00,101.22 1032.50,99.81 1033.00,98.10 1033.50,96.11 1034.00,93.85 1034.50,91.33 1035.00,88.57 1035.50,85.61 1036.00,82.47 1036.50,79.18 1037.00,75.76 1037.50,72.25 1038.00,68.68 1038.50,65.09 1039.00,61.52 1039.50,57.99 1040.00,54.54 1040.50,51.21 1041.00,48.03 1041.50,45.02 1042.00,42.23 1042.50,39.68 1043.00,37.39 1043.50,35.39 1044.00,33.70 1044.50,32.33 1045.00,31.30 1045.50,30.62 1046.00,30.30 1046.50,30.34 1047.00,30.73 1047.50,31.48 1048.00,32.58 1048.50,34.01 1049.00,35.77 1049.50,37.83 1050.00,40.17 1050.50,42.77 1051.00,45.61 1051.50,48.65 1052.00,51.86 1052.50,55.22 1053.00,58.69 1053.50,62.23 1054.00,65.81 1054.50,69.40 1055.00,72.96 1055.50,76.45 1056.00,79.85 1056.50,83.11 1057.00,86.22 1057.50,89.14 1058.00,91.85 1058.50,94.32 1059.00,96.53 1059.50,98.47 1060.00,100.12 1060.50,101.46 1061.00,102.50 1061.50,101.46 1062.00,100.12 1062.50,98.47 1063.00,96.53 1063.50,94.32 1064.00,91.85 1064.50,89.14 1065.00,86.22 1065.50,83.11 1066.00,79.85 1066.50,76.45 1067.00,72.96 1067.50,69.40 1068.00,65.81 1068.50,62.23 1069.00,58.69 1069.50,55.22 1070.00,51.86 1070.50,48.65 1071.00,45.61 1071.50,42.77 1072.00,40.17 1072.50,37.83 1073.00,35.77 1073.50,34.01 1074.00,32.58 1074.50,31.48 1075.00,30.73 1075.50,30.34 1076.00,30.30 1076.50,30.62 1077.00,31.30 1077.50,32.33 1078.00,33.70 1078.50,35.39 1079.00,37.39 1079.50,39.68 1080.00,42.23 1080.50,45.02 1081.00,48.03 1081.50,51.21 1082.00,54.54 1082.50,57.99 1083.00,61.52 1083.50,65.09 1084.00,68.68 1084.50,72.25 1085.00,75.76 1085.50,79.18 1086.00,82.47 1086.50,85.61 1087.00,88.57 1087.50,91.33 1088.00,93.85 1088.50,96.11 1089.00,98.10 1089.50,99.81 1090.00,101.22 1090.50,102.32 1091.00,101.69 1091.50,100.41 1092.00,98.82 1092.50,96.94 1093.00,94.78 1093.50,92.36 1094.00,89.70 1094.50,86.82 1095.00,83.75 1095.50,80.51 1096.00,77.14 1096.50,73.66 1097.00,70.11 1097.50,66.53 1098.00,62.95 1098.50,59.39 1099.00,55.91 1099.50,52.53 1100.00,49.28 1100.50,46.20 1101.00,43.32 1101.50,40.67 1102.00,38.27 1102.50,36.16 1103.00,34.34 1103.50,32.84 1104.00,31.67 1104.50,30.85 1105.00,30.39 1105.50,30.28 1106.00,30.53 1106.50,31.14 1107.00,32.10 1107.50,33.40 1108.00,35.03 1108.50,36.97 1109.00,39.20 1109.50,41.70 1110.00,44.45 1110.50,47.41 1111.00,50.56 1111.50,53.86 1112.00,57.29 1112.50,60.81 1113.00,64.38 1113.50,67.97 1114.00,71.54 1114.50,75.06 1115.00,78.50 1115.50,81.82 1116.00,85.00 1116.50,88.00 1117.00,90.79 1117.50,93.36 1118.00,95.68 1118.50,97.73 1119.00,99.49 1119.50,100.96 1120.00,102.12 1120.50,101.91 1121.00,100.69 1121.50,99.16 1122.00,97.34 1122.50,95.24 1123.00,92.87 1123.50,90.25 1124.00,87.41 1124.50,84.38 1125.00,81.17 1125.50,77.82 1126.00,74.36 1126.50,70.83 1127.00,67.25 1127.50,63.66 1128.00,60.10 1128.50,56.60 1129.00,53.19 1129.50,49.92 1130.00,46.80 1130.50,43.88 1131.00,41.18 1131.50,38.73 1132.00,36.56 1132.50,34.68 1133.00,33.11 1133.50,31.88 1134.00,30.99 1134.50,30.45 1135.00,30.27 1135.50,30.45 1136.00,30.99 1136.50,31.88 1137.00,33.11 1137.50,34.68 1138.00,36.56 1138.50,38.73 1139.00,41.18 1139.50,43.88 1140.00,46.80 1140.50,49.92 1141.00,53.19 1141.50,56.60 1142.00,60.10 1142.50,63.66 1143.00,67.25 1143.50,70.83 1144.00,74.36 1144.50,77.82 1145.00,81.17 1145.50,84.38 1146.00,87.41 1146.50,90.25 1147.00,92.87 1147.50,95.24 1148.00,97.34 1148.50,99.16 1149.00,100.69 1149.50,101.91 1150.00,102.12 1150.50,100.96 1151.00,99.49 1151.50,97.73 1152.00,95.68 1152.50,93.36 1153.00,90.79 1153.50,88.00 1154.00,85.00 1154.50,81.82 1155.00,78.50 1155.50,75.06 1156.00,71.54 1156.50,67.97 1157.00,64.38 1157.50,60.81 1158.00,57.29 1158.50,53.86 1159.00,50.56 1159.50,47.41 1160.00,44.45 1160.50,41.70 1161.00,39.20 1161.50,36.97 1162.00,35.03 1162.50,33.40 1163.00,32.10 1163.50,31.14 1164.00,30.53 1164.50,30.28 1165.00,30.39 1165.50,30.85 1166.00,31.67 1166.50,32.84 1167.00,34.34 1167.50,36.16 1168.00,38.27 1168.50,40.67 1169.00,43.32 1169.50,46.20 1170.00,49.28 1170.50,52.53 1171.00,55.91 1171.50,59.39 1172.00,62.95 1172.50,66.53 1173.00,70.11 1173.50,73.66 1174.00,77.14 1174.50,80.51 1175.00,83.75 1175.50,86.82 1176.00,89.70 1176.50,92.36 1177.00,94.78 1177.50,96.94 1178.00,98.82 1178.50,100.41 1179.00,101.69 1179.50,102.32 1180.00,101.22 1180.50,99.81 1181.00,98.10 1181.50,96.11 1182.00,93.85 1182.50,91.33 1183.00,88.57 1183.50,85.61 1184.00,82.47 1184.50,79.18 1185.00,75.76 1185.50,72.25 1186.00,68.68 1186.50,65.09 1187.00,61.52 1187.50,57.99 1188.00,54.54 1188.50,51.21 1189.00,48.03 1189.50,45.02 1190.00,42.23 1190.50,39.68 1191.00,37.39 1191.50,35.39 1192.00,33.70 1192.50,32.33 1193.00,31.30 1193.50,30.62 1194.00,30.30 1194.50,30.34 1195.00,30.73 1195.50,31.48 1196.00,32.58 1196.50,34.01 1197.00,35.77 1197.50,37.83 1198.00,40.17 1198.50,42.77 1199.00,45.61 1199.50,48.65 1200.00,51.86 1200.50,55.22 1201.00,58.69 1201.50,62.23 1202.00,65.81 1202.50,69.40 1203.00,72.96 1203.50,76.45 1204.00,79.85 1204.50,83.11 1205.00,86.22 1205.50,89.14 1206.00,91.85 1206.50,94.32 1207.00,96.53 1207.50,98.47 1208.00,100.12 1208.50,101.46 1209.00,102.50 1209.50,101.46 1210.00,100.12 1210.50,98.47 1211.00,96.53 1211.50,94.32 1212.00,91.85 1212.50,89.14 1213.00,86.22 1213.50,83.11 1214.00,79.85 1214.50,76.45 1215.00,72.96 1215.50,69.40 1216.00,65.81 1216.50,62.23 1217.00,58.69 1217.50,55.22 1218.00,51.86 1218.50,48.65 1219.00,45.61 1219.50,42.77 1220.00,40.17 1220.50,37.83 1221.00,35.77 1221.50,34.01 1222.00,32.58 1222.50,31.48 1223.00,30.73 1223.50,30.34 1224.00,30.30 1224.50,30.62 1225.00,31.30 1225.50,32.33 1226.00,33.70 1226.50,35.39 1227.00,37.39 1227.50,39.68 1228.00,42.23 1228.50,45.02 1229.00,48.03 1229.50,51.21 1230.00,54.54 1230.50,57.99 1231.00,61.52 1231.50,65.09 1232.00,68.68 1232.50,72.25 1233.00,75.76 1233.50,79.18 1234.00,82.47 1234.50,85.61 1235.00,88.57 1235.50,91.33 1236.00,93.85 1236.50,96.11 1237.00,98.10 1237.50,99.81 1238.00,101.22 1238.50,102.32 1239.00,101.69 1239.50,100.41 1240.00,98.82" fill="none" stroke="#f4d2f0" stroke-width="1.15" stroke-linejoin="round"/>
</g>
<clipPath id="c2"><rect x="57" y="126" width="1183" height="78"/></clipPath>
<g clip-path="url(#c2)">
<polyline points="57.00,161.96 57.50,160.25 58.00,158.55 58.50,156.88 59.00,155.23 59.50,153.60 60.00,152.01 60.50,150.46 61.00,148.95 61.50,147.49 62.00,146.07 62.50,144.72 63.00,143.42 63.50,142.18 64.00,141.00 64.50,139.90 65.00,138.87 65.50,137.91 66.00,137.03 66.50,136.23 67.00,135.51 67.50,134.87 68.00,134.32 68.50,133.86 69.00,133.49 69.50,133.21 70.00,133.02 70.50,132.92 71.00,132.91 71.50,132.99 72.00,133.16 72.50,133.43 73.00,133.78 73.50,134.23 74.00,134.76 74.50,135.37 75.00,136.08 75.50,136.86 76.00,137.73 76.50,138.67 77.00,139.69 77.50,140.78 78.00,141.94 78.50,143.16 79.00,144.45 79.50,145.80 80.00,147.20 80.50,148.65 81.00,150.16 81.50,151.70 82.00,153.28 82.50,154.90 83.00,156.54 83.50,158.22 84.00,159.91 84.50,161.61 85.00,163.33 85.50,165.06 86.00,166.78 86.50,168.50 87.00,170.21 87.50,171.91 88.00,173.59 88.50,175.25 89.00,176.88 89.50,178.47 90.00,180.03 90.50,181.55 91.00,183.02 91.50,184.45 92.00,185.82 92.50,187.13 93.00,188.38 93.50,189.57 94.00,190.69 94.50,191.73 95.00,192.71 95.50,193.60 96.00,194.42 96.50,195.16 97.00,195.81 97.50,196.37 98.00,196.85 98.50,197.24 99.00,197.54 99.50,197.75 100.00,197.87 100.50,197.90 101.00,197.83 101.50,197.68 102.00,197.43 102.50,197.10 103.00,196.67 103.50,196.16 104.00,195.56 104.50,194.87 105.00,194.10 105.50,193.25 106.00,192.33 106.50,191.32 107.00,190.25 107.50,189.10 108.00,187.89 108.50,186.61 109.00,185.28 109.50,183.88 110.00,182.44 110.50,180.95 111.00,179.41 111.50,177.84 112.00,176.23 112.50,174.59 113.00,172.92 113.50,171.23 114.00,169.53 114.50,167.81 115.00,166.09 115.50,164.37 116.00,162.64 116.50,160.93 117.00,159.23 117.50,157.54 118.00,155.88 118.50,154.25 119.00,152.64 119.50,151.08 120.00,149.55 120.50,148.07 121.00,146.63 121.50,145.25 122.00,143.93 122.50,142.66 123.00,141.46 123.50,140.33 124.00,139.27 124.50,138.28 125.00,137.37 125.50,136.54 126.00,135.79 126.50,135.12 127.00,134.53 127.50,134.04 128.00,133.63 128.50,133.31 129.00,133.08 129.50,132.95 130.00,132.90 130.50,132.95 131.00,133.08 131.50,133.31 132.00,133.63 132.50,134.04 133.00,134.53 133.50,135.12 134.00,135.79 134.50,136.54 135.00,137.37 135.50,138.28 136.00,139.27 136.50,140.33 137.00,141.46 137.50,142.66 138.00,143.93 138.50,145.25 139.00,146.63 139.50,148.07 140.00,149.55 140.50,151.08 141.00,152.64 141.50,154.25 142.00,155.88 142.50,157.54 143.00,159.23 143.50,160.93 144.00,162.64 144.50,164.37 145.00,166.09 145.50,167.81 146.00,169.53 146.50,171.23 147.00,172.92 147.50,174.59 148.00,176.23 148.50,177.84 149.00,179.41 149.50,180.95 150.00,182.44 150.50,183.88 151.00,185.28 151.50,186.61 152.00,187.89 152.50,189.10 153.00,190.25 153.50,191.32 154.00,192.33 154.50,193.25 155.00,194.10 155.50,194.87 156.00,195.56 156.50,196.16 157.00,196.67 157.50,197.10 158.00,197.43 158.50,197.68 159.00,197.83 159.50,197.90 160.00,197.87 160.50,197.75 161.00,197.54 161.50,197.24 162.00,196.85 162.50,196.37 163.00,195.81 163.50,195.16 164.00,194.42 164.50,193.60 165.00,192.71 165.50,191.73 166.00,190.69 166.50,189.57 167.00,188.38 167.50,187.13 168.00,185.82 168.50,184.45 169.00,183.02 169.50,181.55 170.00,180.03 170.50,178.47 171.00,176.88 171.50,175.25 172.00,173.59 172.50,171.91 173.00,170.21 173.50,168.50 174.00,166.78 174.50,165.06 175.00,163.33 175.50,161.61 176.00,159.91 176.50,158.22 177.00,156.54 177.50,154.90 178.00,153.28 178.50,151.70 179.00,150.16 179.50,148.65 180.00,147.20 180.50,145.80 181.00,144.45 181.50,143.16 182.00,141.94 182.50,140.78 183.00,139.69 183.50,138.67 184.00,137.73 184.50,136.86 185.00,136.08 185.50,135.37 186.00,134.76 186.50,134.23 187.00,133.78 187.50,133.43 188.00,133.16 188.50,132.99 189.00,132.91 189.50,132.92 190.00,133.02 190.50,133.21 191.00,133.49 191.50,133.86 192.00,134.32 192.50,134.87 193.00,135.51 193.50,136.23 194.00,137.03 194.50,137.91 195.00,138.87 195.50,139.90 196.00,141.00 196.50,142.18 197.00,143.42 197.50,144.72 198.00,146.07 198.50,147.49 199.00,148.95 199.50,150.46 200.00,152.01 200.50,153.60 201.00,155.23 201.50,156.88 202.00,158.55 202.50,160.25 203.00,161.96 203.50,163.68 204.00,165.40 204.50,167.12 205.00,168.84 205.50,170.55 206.00,172.25 206.50,173.92 207.00,175.57 207.50,177.20 208.00,178.79 208.50,180.34 209.00,181.85 209.50,183.31 210.00,184.73 210.50,186.08 211.00,187.38 211.50,188.62 212.00,189.80 212.50,190.90 213.00,191.93 213.50,192.89 214.00,193.77 214.50,194.57 215.00,195.29 215.50,195.93 216.00,196.48 216.50,196.94 217.00,197.31 217.50,197.59 218.00,197.78 218.50,197.88 219.00,197.89 219.50,197.81 220.00,197.64 220.50,197.37 221.00,197.02 221.50,196.57 222.00,196.04 222.50,195.43 223.00,194.72 223.50,193.94 224.00,193.07 224.50,192.13 225.00,191.11 225.50,190.02 226.00,188.86 226.50,187.64 227.00,186.35 227.50,185.00 228.00,183.60 228.50,182.15 229.00,180.64 229.50,179.10 230.00,177.52 230.50,175.90 231.00,174.26 231.50,172.58 232.00,170.89 232.50,169.19 233.00,167.47 233.50,165.74 234.00,164.02 234.50,162.30 235.00,160.59 235.50,158.89 236.00,157.21 236.50,155.55 237.00,153.92 237.50,152.33 238.00,150.77 238.50,149.25 239.00,147.78 239.50,146.35 240.00,144.98 240.50,143.67 241.00,142.42 241.50,141.23 242.00,140.11 242.50,139.07 243.00,138.09 243.50,137.20 244.00,136.38 244.50,135.64 245.00,134.99 245.50,134.43 246.00,133.95 246.50,133.56 247.00,133.26 247.50,133.05 248.00,132.93 248.50,132.90 249.00,132.97 249.50,133.12 250.00,133.37 250.50,133.70 251.00,134.13 251.50,134.64 252.00,135.24 252.50,135.93 253.00,136.70 253.50,137.55 254.00,138.47 254.50,139.48 255.00,140.55 255.50,141.70 256.00,142.91 256.50,144.19 257.00,145.52 257.50,146.92 258.00,148.36 258.50,149.85 259.00,151.39 259.50,152.96 260.00,154.57 260.50,156.21 261.00,157.88 261.50,159.57 262.00,161.27 262.50,162.99 263.00,164.71 263.50,166.43 264.00,168.16 264.50,169.87 265.00,171.57 265.50,173.26 266.00,174.92 266.50,176.55 267.00,178.16 267.50,179.72 268.00,181.25 268.50,182.73 269.00,184.17 269.50,185.55 270.00,186.87 270.50,188.14 271.00,189.34 271.50,190.47 272.00,191.53 272.50,192.52 273.00,193.43 273.50,194.26 274.00,195.01 274.50,195.68 275.00,196.27 275.50,196.76 276.00,197.17 276.50,197.49 277.00,197.72 277.50,197.85 278.00,197.90 278.50,197.85 279.00,197.72 279.50,197.49 280.00,197.17 280.50,196.76 281.00,196.27 281.50,195.68 282.00,195.01 282.50,194.26 283.00,193.43 283.50,192.52 284.00,191.53 284.50,190.47 285.00,189.34 285.50,188.14 286.00,186.87 286.50,185.55 287.00,184.17 287.50,182.73 288.00,181.25 288.50,179.72 289.00,178.16 289.50,176.55 290.00,174.92 290.50,173.26 291.00,171.57 291.50,169.87 292.00,168.16 292.50,166.43 293.00,164.71 293.50,162.99 294.00,161.27 294.50,159.57 295.00,157.88 295.50,156.21 296.00,154.57 296.50,152.96 297.00,151.39 297.50,149.85 298.00,148.36 298.50,146.92 299.00,145.52 299.50,144.19 300.00,142.91 300.50,141.70 301.00,140.55 301.50,139.48 302.00,138.47 302.50,137.55 303.00,136.70 303.50,135.93 304.00,135.24 304.50,134.64 305.00,134.13 305.50,133.70 306.00,133.37 306.50,133.12 307.00,132.97 307.50,132.90 308.00,132.93 308.50,133.05 309.00,133.26 309.50,133.56 310.00,133.95 310.50,134.43 311.00,134.99 311.50,135.64 312.00,136.38 312.50,137.20 313.00,138.09 313.50,139.07 314.00,140.11 314.50,141.23 315.00,142.42 315.50,143.67 316.00,144.98 316.50,146.35 317.00,147.78 317.50,149.25 318.00,150.77 318.50,152.33 319.00,153.92 319.50,155.55 320.00,157.21 320.50,158.89 321.00,160.59 321.50,162.30 322.00,164.02 322.50,165.74 323.00,167.47 323.50,169.19 324.00,170.89 324.50,172.58 325.00,174.26 325.50,175.90 326.00,177.52 326.50,179.10 327.00,180.64 327.50,182.15 328.00,183.60 328.50,185.00 329.00,186.35 329.50,187.64 330.00,188.86 330.50,190.02 331.00,191.11 331.50,192.13 332.00,193.07 332.50,193.94 333.00,194.72 333.50,195.43 334.00,196.04 334.50,196.57 335.00,197.02 335.50,197.37 336.00,197.64 336.50,197.81 337.00,197.89 337.50,197.88 338.00,197.78 338.50,197.59 339.00,197.31 339.50,196.94 340.00,196.48 340.50,195.93 341.00,195.29 341.50,194.57 342.00,193.77 342.50,192.89 343.00,191.93 343.50,190.90 344.00,189.80 344.50,188.62 345.00,187.38 345.50,186.08 346.00,184.73 346.50,183.31 347.00,181.85 347.50,180.34 348.00,178.79 348.50,177.20 349.00,175.57 349.50,173.92 350.00,172.25 350.50,170.55 351.00,168.84 351.50,167.12 352.00,165.40 352.50,163.68 353.00,161.96 353.50,160.25 354.00,158.55 354.50,156.88 355.00,155.23 355.50,153.60 356.00,152.01 356.50,150.46 357.00,148.95 357.50,147.49 358.00,146.07 358.50,144.72 359.00,143.42 359.50,142.18 360.00,141.00 360.50,139.90 361.00,138.87 361.50,137.91 362.00,137.03 362.50,136.23 363.00,135.51 363.50,134.87 364.00,134.32 364.50,133.86 365.00,133.49 365.50,133.21 366.00,133.02 366.50,132.92 367.00,132.91 367.50,132.99 368.00,133.16 368.50,133.43 369.00,133.78 369.50,134.23 370.00,134.76 370.50,135.37 371.00,136.08 371.50,136.86 372.00,137.73 372.50,138.67 373.00,139.69 373.50,140.78 374.00,141.94 374.50,143.16 375.00,144.45 375.50,145.80 376.00,147.20 376.50,148.65 377.00,150.16 377.50,151.70 378.00,153.28 378.50,154.90 379.00,156.54 379.50,158.22 380.00,159.91 380.50,161.61 381.00,163.33 381.50,165.06 382.00,166.78 382.50,168.50 383.00,170.21 383.50,171.91 384.00,173.59 384.50,175.25 385.00,176.88 385.50,178.47 386.00,180.03 386.50,181.55 387.00,183.02 387.50,184.45 388.00,185.82 388.50,187.13 389.00,188.38 389.50,189.57 390.00,190.69 390.50,191.73 391.00,192.71 391.50,193.60 392.00,194.42 392.50,195.16 393.00,195.81 393.50,196.37 394.00,196.85 394.50,197.24 395.00,197.54 395.50,197.75 396.00,197.87 396.50,197.90 397.00,197.83 397.50,197.68 398.00,197.43 398.50,197.10 399.00,196.67 399.50,196.16 400.00,195.56 400.50,194.87 401.00,194.10 401.50,193.25 402.00,192.33 402.50,191.32 403.00,190.25 403.50,189.10 404.00,187.89 404.50,186.61 405.00,185.28 405.50,183.88 406.00,182.44 406.50,180.95 407.00,179.41 407.50,177.84 408.00,176.23 408.50,174.59 409.00,172.92 409.50,171.23 410.00,169.53 410.50,167.81 411.00,166.09 411.50,164.37 412.00,162.64 412.50,160.93 413.00,159.23 413.50,157.54 414.00,155.88 414.50,154.25 415.00,152.64 415.50,151.08 416.00,149.55 416.50,148.07 417.00,146.63 417.50,145.25 418.00,143.93 418.50,142.66 419.00,141.46 419.50,140.33 420.00,139.27 420.50,138.28 421.00,137.37 421.50,136.54 422.00,135.79 422.50,135.12 423.00,134.53 423.50,134.04 424.00,133.63 424.50,133.31 425.00,133.08 425.50,132.95 426.00,132.90 426.50,132.95 427.00,133.08 427.50,133.31 428.00,133.63 428.50,134.04 429.00,134.53 429.50,135.12 430.00,135.79 430.50,136.54 431.00,137.37 431.50,138.28 432.00,139.27 432.50,140.33 433.00,141.46 433.50,142.66 434.00,143.93 434.50,145.25 435.00,146.63 435.50,148.07 436.00,149.55 436.50,151.08 437.00,152.64 437.50,154.25 438.00,155.88 438.50,157.54 439.00,159.23 439.50,160.93 440.00,162.64 440.50,164.37 441.00,166.09 441.50,167.81 442.00,169.53 442.50,171.23 443.00,172.92 443.50,174.59 444.00,176.23 444.50,177.84 445.00,179.41 445.50,180.95 446.00,182.44 446.50,183.88 447.00,185.28 447.50,186.61 448.00,187.89 448.50,189.10 449.00,190.25 449.50,191.32 450.00,192.33 450.50,193.25 451.00,194.10 451.50,194.87 452.00,195.56 452.50,196.16 453.00,196.67 453.50,197.10 454.00,197.43 454.50,197.68 455.00,197.83 455.50,197.90 456.00,197.87 456.50,197.75 457.00,197.54 457.50,197.24 458.00,196.85 458.50,196.37 459.00,195.81 459.50,195.16 460.00,194.42 460.50,193.60 461.00,192.71 461.50,191.73 462.00,190.69 462.50,189.57 463.00,188.38 463.50,187.13 464.00,185.82 464.50,184.45 465.00,183.02 465.50,181.55 466.00,180.03 466.50,178.47 467.00,176.88 467.50,175.25 468.00,173.59 468.50,171.91 469.00,170.21 469.50,168.50 470.00,166.78 470.50,165.06 471.00,163.33 471.50,161.61 472.00,159.91 472.50,158.22 473.00,156.54 473.50,154.90 474.00,153.28 474.50,151.70 475.00,150.16 475.50,148.65 476.00,147.20 476.50,145.80 477.00,144.45 477.50,143.16 478.00,141.94 478.50,140.78 479.00,139.69 479.50,138.67 480.00,137.73 480.50,136.86 481.00,136.08 481.50,135.37 482.00,134.76 482.50,134.23 483.00,133.78 483.50,133.43 484.00,133.16 484.50,132.99 485.00,132.91 485.50,132.92 486.00,133.02 486.50,133.21 487.00,133.49 487.50,133.86 488.00,134.32 488.50,134.87 489.00,135.51 489.50,136.23 490.00,137.03 490.50,137.91 491.00,138.87 491.50,139.90 492.00,141.00 492.50,142.18 493.00,143.42 493.50,144.72 494.00,146.07 494.50,147.49 495.00,148.95 495.50,150.46 496.00,152.01 496.50,153.60 497.00,155.23 497.50,156.88 498.00,158.55 498.50,160.25 499.00,161.96 499.50,163.68 500.00,165.40 500.50,167.12 501.00,168.84 501.50,170.55 502.00,172.25 502.50,173.92 503.00,175.57 503.50,177.20 504.00,178.79 504.50,180.34 505.00,181.85 505.50,183.31 506.00,184.73 506.50,186.08 507.00,187.38 507.50,188.62 508.00,189.80 508.50,190.90 509.00,191.93 509.50,192.89 510.00,193.77 510.50,194.57 511.00,195.29 511.50,195.93 512.00,196.48 512.50,196.94 513.00,197.31 513.50,197.59 514.00,197.78 514.50,197.88 515.00,197.89 515.50,197.81 516.00,197.64 516.50,197.37 517.00,197.02 517.50,196.57 518.00,196.04 518.50,195.43 519.00,194.72 519.50,193.94 520.00,193.07 520.50,192.13 521.00,191.11 521.50,190.02 522.00,188.86 522.50,187.64 523.00,186.35 523.50,185.00 524.00,183.60 524.50,182.15 525.00,180.64 525.50,179.10 526.00,177.52 526.50,175.90 527.00,174.26 527.50,172.58 528.00,170.89 528.50,169.19 529.00,167.47 529.50,165.74 530.00,164.02 530.50,162.30 531.00,160.59 531.50,158.89 532.00,157.21 532.50,155.55 533.00,153.92 533.50,152.33 534.00,150.77 534.50,149.25 535.00,147.78 535.50,146.35 536.00,144.98 536.50,143.67 537.00,142.42 537.50,141.23 538.00,140.11 538.50,139.07 539.00,138.09 539.50,137.20 540.00,136.38 540.50,135.64 541.00,134.99 541.50,134.43 542.00,133.95 542.50,133.56 543.00,133.26 543.50,133.05 544.00,132.93 544.50,132.90 545.00,132.97 545.50,133.12 546.00,133.37 546.50,133.70 547.00,134.13 547.50,134.64 548.00,135.24 548.50,135.93 549.00,136.70 549.50,137.55 550.00,138.47 550.50,139.48 551.00,140.55 551.50,141.70 552.00,142.91 552.50,144.19 553.00,145.52 553.50,146.92 554.00,148.36 554.50,149.85 555.00,151.39 555.50,152.96 556.00,154.57 556.50,156.21 557.00,157.88 557.50,159.57 558.00,161.27 558.50,162.99 559.00,164.71 559.50,166.43 560.00,168.16 560.50,169.87 561.00,171.57 561.50,173.26 562.00,174.92 562.50,176.55 563.00,178.16 563.50,179.72 564.00,181.25 564.50,182.73 565.00,184.17 565.50,185.55 566.00,186.87 566.50,188.14 567.00,189.34 567.50,190.47 568.00,191.53 568.50,192.52 569.00,193.43 569.50,194.26 570.00,195.01 570.50,195.68 571.00,196.27 571.50,196.76 572.00,197.17 572.50,197.49 573.00,197.72 573.50,197.85 574.00,197.90 574.50,197.85 575.00,197.72 575.50,197.49 576.00,197.17 576.50,196.76 577.00,196.27 577.50,195.68 578.00,195.01 578.50,194.26 579.00,193.43 579.50,192.52 580.00,191.53 580.50,190.47 581.00,189.34 581.50,188.14 582.00,186.87 582.50,185.55 583.00,184.17 583.50,182.73 584.00,181.25 584.50,179.72 585.00,178.16 585.50,176.55 586.00,174.92 586.50,173.26 587.00,171.57 587.50,169.87 588.00,168.16 588.50,166.43 589.00,164.71 589.50,162.99 590.00,161.27 590.50,159.57 591.00,157.88 591.50,156.21 592.00,154.57 592.50,152.96 593.00,151.39 593.50,149.85 594.00,148.36 594.50,146.92 595.00,145.52 595.50,144.19 596.00,142.91 596.50,141.70 597.00,140.55 597.50,139.48 598.00,138.47 598.50,137.55 599.00,136.70 599.50,135.93 600.00,135.24 600.50,134.64 601.00,134.13 601.50,133.70 602.00,133.37 602.50,133.12 603.00,132.97 603.50,132.90 604.00,132.93 604.50,133.05 605.00,133.26 605.50,133.56 606.00,133.95 606.50,134.43 607.00,134.99 607.50,135.64 608.00,136.38 608.50,137.20 609.00,138.09 609.50,139.07 610.00,140.11 610.50,141.23 611.00,142.42 611.50,143.67 612.00,144.98 612.50,146.35 613.00,147.78 613.50,149.25 614.00,150.77 614.50,152.33 615.00,153.92 615.50,155.55 616.00,157.21 616.50,158.89 617.00,160.59 617.50,162.30 618.00,164.02 618.50,165.74 619.00,167.47 619.50,169.19 620.00,170.89 620.50,172.58 621.00,174.26 621.50,175.90 622.00,177.52 622.50,179.10 623.00,180.64 623.50,182.15 624.00,183.60 624.50,185.00 625.00,186.35 625.50,187.64 626.00,188.86 626.50,190.02 627.00,191.11 627.50,192.13 628.00,193.07 628.50,193.94 629.00,194.72 629.50,195.43 630.00,196.04 630.50,196.57 631.00,197.02 631.50,197.37 632.00,197.64 632.50,197.81 633.00,197.89 633.50,197.88 634.00,197.78 634.50,197.59 635.00,197.31 635.50,196.94 636.00,196.48 636.50,195.93 637.00,195.29 637.50,194.57 638.00,193.77 638.50,192.89 639.00,191.93 639.50,190.90 640.00,189.80 640.50,188.62 641.00,187.38 641.50,186.08 642.00,184.73 642.50,183.31 643.00,181.85 643.50,180.34 644.00,178.79 644.50,177.20 645.00,175.57 645.50,173.92 646.00,172.25 646.50,170.55 647.00,168.84 647.50,167.12 648.00,165.40 648.50,163.68 649.00,161.96 649.50,160.25 650.00,158.55 650.50,156.88 651.00,155.23 651.50,153.60 652.00,152.01 652.50,150.46 653.00,148.95 653.50,147.49 654.00,146.07 654.50,144.72 655.00,143.42 655.50,142.18 656.00,141.00 656.50,139.90 657.00,138.87 657.50,137.91 658.00,137.03 658.50,136.23 659.00,135.51 659.50,134.87 660.00,134.32 660.50,133.86 661.00,133.49 661.50,133.21 662.00,133.02 662.50,132.92 663.00,132.91 663.50,132.99 664.00,133.16 664.50,133.43 665.00,133.78 665.50,134.23 666.00,134.76 666.50,135.37 667.00,136.08 667.50,136.86 668.00,137.73 668.50,138.67 669.00,139.69 669.50,140.78 670.00,141.94 670.50,143.16 671.00,144.45 671.50,145.80 672.00,147.20 672.50,148.65 673.00,150.16 673.50,151.70 674.00,153.28 674.50,154.90 675.00,156.54 675.50,158.22 676.00,159.91 676.50,161.61 677.00,163.33 677.50,165.06 678.00,166.78 678.50,168.50 679.00,170.21 679.50,171.91 680.00,173.59 680.50,175.25 681.00,176.88 681.50,178.47 682.00,180.03 682.50,181.55 683.00,183.02 683.50,184.45 684.00,185.82 684.50,187.13 685.00,188.38 685.50,189.57 686.00,190.69 686.50,191.73 687.00,192.71 687.50,193.60 688.00,194.42 688.50,195.16 689.00,195.81 689.50,196.37 690.00,196.85 690.50,197.24 691.00,197.54 691.50,197.75 692.00,197.87 692.50,197.90 693.00,197.83 693.50,197.68 694.00,197.43 694.50,197.10 695.00,196.67 695.50,196.16 696.00,195.56 696.50,194.87 697.00,194.10 697.50,193.25 698.00,192.33 698.50,191.32 699.00,190.25 699.50,189.10 700.00,187.89 700.50,186.61 701.00,185.28 701.50,183.88 702.00,182.44 702.50,180.95 703.00,179.41 703.50,177.84 704.00,176.23 704.50,174.59 705.00,172.92 705.50,171.23 706.00,169.53 706.50,167.81 707.00,166.09 707.50,164.37 708.00,162.64 708.50,160.93 709.00,159.23 709.50,157.54 710.00,155.88 710.50,154.25 711.00,152.64 711.50,151.08 712.00,149.55 712.50,148.07 713.00,146.63 713.50,145.25 714.00,143.93 714.50,142.66 715.00,141.46 715.50,140.33 716.00,139.27 716.50,138.28 717.00,137.37 717.50,136.54 718.00,135.79 718.50,135.12 719.00,134.53 719.50,134.04 720.00,133.63 720.50,133.31 721.00,133.08 721.50,132.95 722.00,132.90 722.50,132.95 723.00,133.08 723.50,133.31 724.00,133.63 724.50,134.04 725.00,134.53 725.50,135.12 726.00,135.79 726.50,136.54 727.00,137.37 727.50,138.28 728.00,139.27 728.50,140.33 729.00,141.46 729.50,142.66 730.00,143.93 730.50,145.25 731.00,146.63 731.50,148.07 732.00,149.55 732.50,151.08 733.00,152.64 733.50,154.25 734.00,155.88 734.50,157.54 735.00,159.23 735.50,160.93 736.00,162.64 736.50,164.37 737.00,166.09 737.50,167.81 738.00,169.53 738.50,171.23 739.00,172.92 739.50,174.59 740.00,176.23 740.50,177.84 741.00,179.41 741.50,180.95 742.00,182.44 742.50,183.88 743.00,185.28 743.50,186.61 744.00,187.89 744.50,189.10 745.00,190.25 745.50,191.32 746.00,192.33 746.50,193.25 747.00,194.10 747.50,194.87 748.00,195.56 748.50,196.16 749.00,196.67 749.50,197.10 750.00,197.43 750.50,197.68 751.00,197.83 751.50,197.90 752.00,197.87 752.50,197.75 753.00,197.54 753.50,197.24 754.00,196.85 754.50,196.37 755.00,195.81 755.50,195.16 756.00,194.42 756.50,193.60 757.00,192.71 757.50,191.73 758.00,190.69 758.50,189.57 759.00,188.38 759.50,187.13 760.00,185.82 760.50,184.45 761.00,183.02 761.50,181.55 762.00,180.03 762.50,178.47 763.00,176.88 763.50,175.25 764.00,173.59 764.50,171.91 765.00,170.21 765.50,168.50 766.00,166.78 766.50,165.06 767.00,163.33 767.50,161.61 768.00,159.91 768.50,158.22 769.00,156.54 769.50,154.90 770.00,153.28 770.50,151.70 771.00,150.16 771.50,148.65 772.00,147.20 772.50,145.80 773.00,144.45 773.50,143.16 774.00,141.94 774.50,140.78 775.00,139.69 775.50,138.67 776.00,137.73 776.50,136.86 777.00,136.08 777.50,135.37 778.00,134.76 778.50,134.23 779.00,133.78 779.50,133.43 780.00,133.16 780.50,132.99 781.00,132.91 781.50,132.92 782.00,133.02 782.50,133.21 783.00,133.49 783.50,133.86 784.00,134.32 784.50,134.87 785.00,135.51 785.50,136.23 786.00,137.03 786.50,137.91 787.00,138.87 787.50,139.90 788.00,141.00 788.50,142.18 789.00,143.42 789.50,144.72 790.00,146.07 790.50,147.49 791.00,148.95 791.50,150.46 792.00,152.01 792.50,153.60 793.00,155.23 793.50,156.88 794.00,158.55 794.50,160.25 795.00,161.96 795.50,163.68 796.00,165.40 796.50,167.12 797.00,168.84 797.50,170.55 798.00,172.25 798.50,173.92 799.00,175.57 799.50,177.20 800.00,178.79 800.50,180.34 801.00,181.85 801.50,183.31 802.00,184.73 802.50,186.08 803.00,187.38 803.50,188.62 804.00,189.80 804.50,190.90 805.00,191.93 805.50,192.89 806.00,193.77 806.50,194.57 807.00,195.29 807.50,195.93 808.00,196.48 808.50,196.94 809.00,197.31 809.50,197.59 810.00,197.78 810.50,197.88 811.00,197.89 811.50,197.81 812.00,197.64 812.50,197.37 813.00,197.02 813.50,196.57 814.00,196.04 814.50,195.43 815.00,194.72 815.50,193.94 816.00,193.07 816.50,192.13 817.00,191.11 817.50,190.02 818.00,188.86 818.50,187.64 819.00,186.35 819.50,185.00 820.00,183.60 820.50,182.15 821.00,180.64 821.50,179.10 822.00,177.52 822.50,175.90 823.00,174.26 823.50,172.58 824.00,170.89 824.50,169.19 825.00,167.47 825.50,165.74 826.00,164.02 826.50,162.30 827.00,160.59 827.50,158.89 828.00,157.21 828.50,155.55 829.00,153.92 829.50,152.33 830.00,150.77 830.50,149.25 831.00,147.78 831.50,146.35 832.00,144.98 832.50,143.67 833.00,142.42 833.50,141.23 834.00,140.11 834.50,139.07 835.00,138.09 835.50,137.20 836.00,136.38 836.50,135.64 837.00,134.99 837.50,134.43 838.00,133.95 838.50,133.56 839.00,133.26 839.50,133.05 840.00,132.93 840.50,132.90 841.00,132.97 841.50,133.12 842.00,133.37 842.50,133.70 843.00,134.13 843.50,134.64 844.00,135.24 844.50,135.93 845.00,136.70 845.50,137.55 846.00,138.47 846.50,139.48 847.00,140.55 847.50,141.70 848.00,142.91 848.50,144.19 849.00,145.52 849.50,146.92 850.00,148.36 850.50,149.85 851.00,151.39 851.50,152.96 852.00,154.57 852.50,156.21 853.00,157.88 853.50,159.57 854.00,161.27 854.50,162.99 855.00,164.71 855.50,166.43 856.00,168.16 856.50,169.87 857.00,171.57 857.50,173.26 858.00,174.92 858.50,176.55 859.00,178.16 859.50,179.72 860.00,181.25 860.50,182.73 861.00,184.17 861.50,185.55 862.00,186.87 862.50,188.14 863.00,189.34 863.50,190.47 864.00,191.53 864.50,192.52 865.00,193.43 865.50,194.26 866.00,195.01 866.50,195.68 867.00,196.27 867.50,196.76 868.00,197.17 868.50,197.49 869.00,197.72 869.50,197.85 870.00,197.90 870.50,197.85 871.00,197.72 871.50,197.49 872.00,197.17 872.50,196.76 873.00,196.27 873.50,195.68 874.00,195.01 874.50,194.26 875.00,193.43 875.50,192.52 876.00,191.53 876.50,190.47 877.00,189.34 877.50,188.14 878.00,186.87 878.50,185.55 879.00,184.17 879.50,182.73 880.00,181.25 880.50,179.72 881.00,178.16 881.50,176.55 882.00,174.92 882.50,173.26 883.00,171.57 883.50,169.87 884.00,168.16 884.50,166.43 885.00,164.71 885.50,162.99 886.00,161.27 886.50,159.57 887.00,157.88 887.50,156.21 888.00,154.57 888.50,152.96 889.00,151.39 889.50,149.85 890.00,148.36 890.50,146.92 891.00,145.52 891.50,144.19 892.00,142.91 892.50,141.70 893.00,140.55 893.50,139.48 894.00,138.47 894.50,137.55 895.00,136.70 895.50,135.93 896.00,135.24 896.50,134.64 897.00,134.13 897.50,133.70 898.00,133.37 898.50,133.12 899.00,132.97 899.50,132.90 900.00,132.93 900.50,133.05 901.00,133.26 901.50,133.56 902.00,133.95 902.50,134.43 903.00,134.99 903.50,135.64 904.00,136.38 904.50,137.20 905.00,138.09 905.50,139.07 906.00,140.11 906.50,141.23 907.00,142.42 907.50,143.67 908.00,144.98 908.50,146.35 909.00,147.78 909.50,149.25 910.00,150.77 910.50,152.33 911.00,153.92 911.50,155.55 912.00,157.21 912.50,158.89 913.00,160.59 913.50,162.30 914.00,164.02 914.50,165.74 915.00,167.47 915.50,169.19 916.00,170.89 916.50,172.58 917.00,174.26 917.50,175.90 918.00,177.52 918.50,179.10 919.00,180.64 919.50,182.15 920.00,183.60 920.50,185.00 921.00,186.35 921.50,187.64 922.00,188.86 922.50,190.02 923.00,191.11 923.50,192.13 924.00,193.07 924.50,193.94 925.00,194.72 925.50,195.43 926.00,196.04 926.50,196.57 927.00,197.02 927.50,197.37 928.00,197.64 928.50,197.81 929.00,197.89 929.50,197.88 930.00,197.78 930.50,197.59 931.00,197.31 931.50,196.94 932.00,196.48 932.50,195.93 933.00,195.29 933.50,194.57 934.00,193.77 934.50,192.89 935.00,191.93 935.50,190.90 936.00,189.80 936.50,188.62 937.00,187.38 937.50,186.08 938.00,184.73 938.50,183.31 939.00,181.85 939.50,180.34 940.00,178.79 940.50,177.20 941.00,175.57 941.50,173.92 942.00,172.25 942.50,170.55 943.00,168.84 943.50,167.12 944.00,165.40 944.50,163.68 945.00,161.96 945.50,160.25 946.00,158.55 946.50,156.88 947.00,155.23 947.50,153.60 948.00,152.01 948.50,150.46 949.00,148.95 949.50,147.49 950.00,146.07 950.50,144.72 951.00,143.42 951.50,142.18 952.00,141.00 952.50,139.90 953.00,138.87 953.50,137.91 954.00,137.03 954.50,136.23 955.00,135.51 955.50,134.87 956.00,134.32 956.50,133.86 957.00,133.49 957.50,133.21 958.00,133.02 958.50,132.92 959.00,132.91 959.50,132.99 960.00,133.16 960.50,133.43 961.00,133.78 961.50,134.23 962.00,134.76 962.50,135.37 963.00,136.08 963.50,136.86 964.00,137.73 964.50,138.67 965.00,139.69 965.50,140.78 966.00,141.94 966.50,143.16 967.00,144.45 967.50,145.80 968.00,147.20 968.50,148.65 969.00,150.16 969.50,151.70 970.00,153.28 970.50,154.90 971.00,156.54 971.50,158.22 972.00,159.91 972.50,161.61 973.00,163.33 973.50,165.06 974.00,166.78 974.50,168.50 975.00,170.21 975.50,171.91 976.00,173.59 976.50,175.25 977.00,176.88 977.50,178.47 978.00,180.03 978.50,181.55 979.00,183.02 979.50,184.45 980.00,185.82 980.50,187.13 981.00,188.38 981.50,189.57 982.00,190.69 982.50,191.73 983.00,192.71 983.50,193.60 984.00,194.42 984.50,195.16 985.00,195.81 985.50,196.37 986.00,196.85 986.50,197.24 987.00,197.54 987.50,197.75 988.00,197.87 988.50,197.90 989.00,197.83 989.50,197.68 990.00,197.43 990.50,197.10 991.00,196.67 991.50,196.16 992.00,195.56 992.50,194.87 993.00,194.10 993.50,193.25 994.00,192.33 994.50,191.32 995.00,190.25 995.50,189.10 996.00,187.89 996.50,186.61 997.00,185.28 997.50,183.88 998.00,182.44 998.50,180.95 999.00,179.41 999.50,177.84 1000.00,176.23 1000.50,174.59 1001.00,172.92 1001.50,171.23 1002.00,169.53 1002.50,167.81 1003.00,166.09 1003.50,164.37 1004.00,162.64 1004.50,160.93 1005.00,159.23 1005.50,157.54 1006.00,155.88 1006.50,154.25 1007.00,152.64 1007.50,151.08 1008.00,149.55 1008.50,148.07 1009.00,146.63 1009.50,145.25 1010.00,143.93 1010.50,142.66 1011.00,141.46 1011.50,140.33 1012.00,139.27 1012.50,138.28 1013.00,137.37 1013.50,136.54 1014.00,135.79 1014.50,135.12 1015.00,134.53 1015.50,134.04 1016.00,133.63 1016.50,133.31 1017.00,133.08 1017.50,132.95 1018.00,132.90 1018.50,132.95 1019.00,133.08 1019.50,133.31 1020.00,133.63 1020.50,134.04 1021.00,134.53 1021.50,135.12 1022.00,135.79 1022.50,136.54 1023.00,137.37 1023.50,138.28 1024.00,139.27 1024.50,140.33 1025.00,141.46 1025.50,142.66 1026.00,143.93 1026.50,145.25 1027.00,146.63 1027.50,148.07 1028.00,149.55 1028.50,151.08 1029.00,152.64 1029.50,154.25 1030.00,155.88 1030.50,157.54 1031.00,159.23 1031.50,160.93 1032.00,162.64 1032.50,164.37 1033.00,166.09 1033.50,167.81 1034.00,169.53 1034.50,171.23 1035.00,172.92 1035.50,174.59 1036.00,176.23 1036.50,177.84 1037.00,179.41 1037.50,180.95 1038.00,182.44 1038.50,183.88 1039.00,185.28 1039.50,186.61 1040.00,187.89 1040.50,189.10 1041.00,190.25 1041.50,191.32 1042.00,192.33 1042.50,193.25 1043.00,194.10 1043.50,194.87 1044.00,195.56 1044.50,196.16 1045.00,196.67 1045.50,197.10 1046.00,197.43 1046.50,197.68 1047.00,197.83 1047.50,197.90 1048.00,197.87 1048.50,197.75 1049.00,197.54 1049.50,197.24 1050.00,196.85 1050.50,196.37 1051.00,195.81 1051.50,195.16 1052.00,194.42 1052.50,193.60 1053.00,192.71 1053.50,191.73 1054.00,190.69 1054.50,189.57 1055.00,188.38 1055.50,187.13 1056.00,185.82 1056.50,184.45 1057.00,183.02 1057.50,181.55 1058.00,180.03 1058.50,178.47 1059.00,176.88 1059.50,175.25 1060.00,173.59 1060.50,171.91 1061.00,170.21 1061.50,168.50 1062.00,166.78 1062.50,165.06 1063.00,163.33 1063.50,161.61 1064.00,159.91 1064.50,158.22 1065.00,156.54 1065.50,154.90 1066.00,153.28 1066.50,151.70 1067.00,150.16 1067.50,148.65 1068.00,147.20 1068.50,145.80 1069.00,144.45 1069.50,143.16 1070.00,141.94 1070.50,140.78 1071.00,139.69 1071.50,138.67 1072.00,137.73 1072.50,136.86 1073.00,136.08 1073.50,135.37 1074.00,134.76 1074.50,134.23 1075.00,133.78 1075.50,133.43 1076.00,133.16 1076.50,132.99 1077.00,132.91 1077.50,132.92 1078.00,133.02 1078.50,133.21 1079.00,133.49 1079.50,133.86 1080.00,134.32 1080.50,134.87 1081.00,135.51 1081.50,136.23 1082.00,137.03 1082.50,137.91 1083.00,138.87 1083.50,139.90 1084.00,141.00 1084.50,142.18 1085.00,143.42 1085.50,144.72 1086.00,146.07 1086.50,147.49 1087.00,148.95 1087.50,150.46 1088.00,152.01 1088.50,153.60 1089.00,155.23 1089.50,156.88 1090.00,158.55 1090.50,160.25 1091.00,161.96 1091.50,163.68 1092.00,165.40 1092.50,167.12 1093.00,168.84 1093.50,170.55 1094.00,172.25 1094.50,173.92 1095.00,175.57 1095.50,177.20 1096.00,178.79 1096.50,180.34 1097.00,181.85 1097.50,183.31 1098.00,184.73 1098.50,186.08 1099.00,187.38 1099.50,188.62 1100.00,189.80 1100.50,190.90 1101.00,191.93 1101.50,192.89 1102.00,193.77 1102.50,194.57 1103.00,195.29 1103.50,195.93 1104.00,196.48 1104.50,196.94 1105.00,197.31 1105.50,197.59 1106.00,197.78 1106.50,197.88 1107.00,197.89 1107.50,197.81 1108.00,197.64 1108.50,197.37 1109.00,197.02 1109.50,196.57 1110.00,196.04 1110.50,195.43 1111.00,194.72 1111.50,193.94 1112.00,193.07 1112.50,192.13 1113.00,191.11 1113.50,190.02 1114.00,188.86 1114.50,187.64 1115.00,186.35 1115.50,185.00 1116.00,183.60 1116.50,182.15 1117.00,180.64 1117.50,179.10 1118.00,177.52 1118.50,175.90 1119.00,174.26 1119.50,172.58 1120.00,170.89 1120.50,169.19 1121.00,167.47 1121.50,165.74 1122.00,164.02 1122.50,162.30 1123.00,160.59 1123.50,158.89 1124.00,157.21 1124.50,155.55 1125.00,153.92 1125.50,152.33 1126.00,150.77 1126.50,149.25 1127.00,147.78 1127.50,146.35 1128.00,144.98 1128.50,143.67 1129.00,142.42 1129.50,141.23 1130.00,140.11 1130.50,139.07 1131.00,138.09 1131.50,137.20 1132.00,136.38 1132.50,135.64 1133.00,134.99 1133.50,134.43 1134.00,133.95 1134.50,133.56 1135.00,133.26 1135.50,133.05 1136.00,132.93 1136.50,132.90 1137.00,132.97 1137.50,133.12 1138.00,133.37 1138.50,133.70 1139.00,134.13 1139.50,134.64 1140.00,135.24 1140.50,135.93 1141.00,136.70 1141.50,137.55 1142.00,138.47 1142.50,139.48 1143.00,140.55 1143.50,141.70 1144.00,142.91 1144.50,144.19 1145.00,145.52 1145.50,146.92 1146.00,148.36 1146.50,149.85 1147.00,151.39 1147.50,152.96 1148.00,154.57 1148.50,156.21 1149.00,157.88 1149.50,159.57 1150.00,161.27 1150.50,162.99 1151.00,164.71 1151.50,166.43 1152.00,168.16 1152.50,169.87 1153.00,171.57 1153.50,173.26 1154.00,174.92 1154.50,176.55 1155.00,178.16 1155.50,179.72 1156.00,181.25 1156.50,182.73 1157.00,184.17 1157.50,185.55 1158.00,186.87 1158.50,188.14 1159.00,189.34 1159.50,190.47 1160.00,191.53 1160.50,192.52 1161.00,193.43 1161.50,194.26 1162.00,195.01 1162.50,195.68 1163.00,196.27 1163.50,196.76 1164.00,197.17 1164.50,197.49 1165.00,197.72 1165.50,197.85 1166.00,197.90 1166.50,197.85 1167.00,197.72 1167.50,197.49 1168.00,197.17 1168.50,196.76 1169.00,196.27 1169.50,195.68 1170.00,195.01 1170.50,194.26 1171.00,193.43 1171.50,192.52 1172.00,191.53 1172.50,190.47 1173.00,189.34 1173.50,188.14 1174.00,186.87 1174.50,185.55 1175.00,184.17 1175.50,182.73 1176.00,181.25 1176.50,179.72 1177.00,178.16 1177.50,176.55 1178.00,174.92 1178.50,173.26 1179.00,171.57 1179.50,169.87 1180.00,168.16 1180.50,166.43 1181.00,164.71 1181.50,162.99 1182.00,161.27 1182.50,159.57 1183.00,157.88 1183.50,156.21 1184.00,154.57 1184.50,152.96 1185.00,151.39 1185.50,149.85 1186.00,148.36 1186.50,146.92 1187.00,145.52 1187.50,144.19 1188.00,142.91 1188.50,141.70 1189.00,140.55 1189.50,139.48 1190.00,138.47 1190.50,137.55 1191.00,136.70 1191.50,135.93 1192.00,135.24 1192.50,134.64 1193.00,134.13 1193.50,133.70 1194.00,133.37 1194.50,133.12 1195.00,132.97 1195.50,132.90 1196.00,132.93 1196.50,133.05 1197.00,133.26 1197.50,133.56 1198.00,133.95 1198.50,134.43 1199.00,134.99 1199.50,135.64 1200.00,136.38 1200.50,137.20 1201.00,138.09 1201.50,139.07 1202.00,140.11 1202.50,141.23 1203.00,142.42 1203.50,143.67 1204.00,144.98 1204.50,146.35 1205.00,147.78 1205.50,149.25 1206.00,150.77 1206.50,152.33 1207.00,153.92 1207.50,155.55 1208.00,157.21 1208.50,158.89 1209.00,160.59 1209.50,162.30 1210.00,164.02 1210.50,165.74 1211.00,167.47 1211.50,169.19 1212.00,170.89 1212.50,172.58 1213.00,174.26 1213.50,175.90 1214.00,177.52 1214.50,179.10 1215.00,180.64 1215.50,182.15 1216.00,183.60 1216.50,185.00 1217.00,186.35 1217.50,187.64 1218.00,188.86 1218.50,190.02 1219.00,191.11 1219.50,192.13 1220.00,193.07 1220.50,193.94 1221.00,194.72 1221.50,195.43 1222.00,196.04 1222.50,196.57 1223.00,197.02 1223.50,197.37 1224.00,197.64 1224.50,197.81 1225.00,197.89 1225.50,197.88 1226.00,197.78 1226.50,197.59 1227.00,197.31 1227.50,196.94 1228.00,196.48 1228.50,195.93 1229.00,195.29 1229.50,194.57 1230.00,193.77 1230.50,192.89 1231.00,191.93 1231.50,190.90 1232.00,189.80 1232.50,188.62 1233.00,187.38 1233.50,186.08 1234.00,184.73 1234.50,183.31 1235.00,181.85 1235.50,180.34 1236.00,178.79 1236.50,177.20 1237.00,175.57 1237.50,173.92 1238.00,172.25 1238.50,170.55 1239.00,168.84 1239.50,167.12 1240.00,165.40" fill="none" stroke="#74dcc6" stroke-width="1.15" stroke-linejoin="round"/>
</g>
<clipPath id="c3"><rect x="57" y="228" width="1183" height="81"/></clipPath>
<g clip-path="url(#c3)">
<polyline points="57.00,269.86 58.00,270.01 59.00,270.16 60.00,270.31 61.00,270.46 62.00,270.62 63.00,270.77 64.00,270.92 65.00,271.07 66.00,271.22 67.00,271.38 68.00,271.53 69.00,271.68 70.00,271.83 71.00,271.98 72.00,272.14 73.00,272.29 74.00,272.44 75.00,272.59 76.00,272.74 77.00,272.90 78.00,273.05 79.00,273.20 80.00,273.35 81.00,273.50 82.00,273.66 83.00,273.81 84.00,273.96 85.00,274.11 86.00,274.26 87.00,274.42 88.00,274.57 89.00,274.72 90.00,274.87 91.00,275.02 92.00,275.18 93.00,275.33 94.00,275.48 95.00,275.63 96.00,275.78 97.00,275.94 98.00,276.09 99.00,276.24 100.00,276.39 101.00,276.54 102.00,276.70 103.00,276.85 104.00,277.00 105.00,277.15 106.00,277.30 107.00,277.46 108.00,277.61 109.00,277.76 110.00,277.91 111.00,278.06 112.00,278.22 113.00,278.37 114.00,278.52 115.00,278.67 116.00,278.82 117.00,278.98 118.00,279.13 119.00,279.28 120.00,279.43 121.00,279.58 122.00,279.74 123.00,279.89 124.00,280.04 125.00,280.19 126.00,280.34 127.00,280.50 128.00,280.65 129.00,280.80 130.00,280.95 131.00,281.10 132.00,281.26 133.00,281.41 134.00,281.56 135.00,281.71 136.00,281.86 137.00,282.02 138.00,282.17 139.00,282.32 140.00,282.47 141.00,282.62 142.00,282.78 143.00,282.93 144.00,283.08 145.00,283.23 146.00,283.38 147.00,283.54 148.00,283.69 149.00,283.84 150.00,283.99 151.00,284.14 152.00,284.30 153.00,284.45 154.00,284.60 155.00,284.75 156.00,284.90 157.00,285.06 158.00,285.21 159.00,285.36 160.00,285.51 161.00,285.66 162.00,285.82 163.00,285.97 164.00,286.12 165.00,286.27 166.00,286.42 167.00,286.58 168.00,286.73 169.00,286.88 170.00,287.03 171.00,287.18 172.00,287.34 173.00,287.49 174.00,287.64 175.00,287.79 176.00,287.94 177.00,288.10 178.00,288.25 179.00,288.40 180.00,288.55 181.00,288.70 182.00,288.86 183.00,289.01 184.00,289.16 185.00,289.31 186.00,289.46 187.00,289.62 188.00,289.77 189.00,289.92 190.00,290.07 191.00,290.22 192.00,290.38 193.00,290.53 194.00,290.68 195.00,290.83 196.00,290.98 197.00,291.14 198.00,291.29 199.00,291.44 200.00,291.59 201.00,291.74 202.00,291.90 203.00,292.05 204.00,292.20 205.00,292.35 206.00,292.50 207.00,292.66 208.00,292.81 209.00,292.96 210.00,293.11 211.00,293.26 212.00,293.42 213.00,293.57 214.00,293.72 215.00,293.87 216.00,294.02 217.00,294.18 218.00,294.33 219.00,294.48 220.00,294.63 221.00,294.78 222.00,294.94 223.00,295.09 224.00,295.24 225.00,295.39 226.00,295.54 227.00,295.70 228.00,295.85 229.00,296.00 230.00,296.15 231.00,296.30 232.00,296.46 233.00,296.61 234.00,296.76 235.00,296.91 236.00,297.06 237.00,297.22 238.00,297.37 239.00,297.52 240.00,297.67 241.00,297.82 242.00,297.98 243.00,298.13 244.00,298.28 245.00,298.43 246.00,298.58 247.00,298.74 248.00,298.89 249.00,299.04 250.00,299.19 251.00,299.34 252.00,299.50 253.00,299.65 254.00,299.80 255.00,299.95 256.00,300.10 257.00,300.26 258.00,300.41 259.00,300.56 260.00,300.71 261.00,300.86 262.00,301.02 263.00,301.17 264.00,301.32 265.00,301.47 266.00,301.62 267.00,301.78 268.00,301.93 269.00,302.08 270.00,302.23 271.00,302.38 272.00,302.54 273.00,302.69 274.00,302.84 275.00,302.99 276.00,303.14 277.00,303.28 278.00,303.42 279.00,303.57 280.00,303.70 281.00,303.84 282.00,303.97 283.00,304.10 284.00,304.23 285.00,304.36 286.00,304.48 287.00,304.60 288.00,304.72 289.00,304.84 290.00,304.96 291.00,305.07 292.00,305.18 293.00,305.29 294.00,305.39 295.00,305.49 296.00,305.60 297.00,305.69 298.00,305.79 299.00,305.88 300.00,305.97 301.00,306.06 302.00,306.15 303.00,306.23 304.00,306.32 305.00,306.40 306.00,306.57 307.00,306.49 308.00,306.41 309.00,306.33 310.00,306.25 311.00,306.01 312.00,305.54 313.00,305.06 314.00,304.59 315.00,304.12 316.00,303.64 317.00,303.17 318.00,302.69 319.00,301.90 320.00,301.03 321.00,300.15 322.00,299.28 323.00,298.40 324.00,297.53 325.00,296.60 326.00,295.60 327.00,294.60 328.00,293.60 329.00,292.60 330.00,291.60 331.00,290.60 332.00,289.60 333.00,288.45 334.00,287.21 335.00,285.96 336.00,284.71 337.00,283.47 338.00,282.22 339.00,280.98 340.00,279.73 341.00,278.48 342.00,277.24 343.00,275.99 344.00,274.75 345.00,273.50 346.00,271.80 347.00,270.10 348.00,268.39 349.00,266.69 350.00,264.99 351.00,263.29 352.00,261.59 353.00,259.88 354.00,258.18 355.00,256.80 356.00,255.65 357.00,254.49 358.00,253.33 359.00,252.17 360.00,251.01 361.00,249.85 362.00,248.70 363.00,247.64 364.00,246.73 365.00,245.82 366.00,244.92 367.00,244.01 368.00,243.10 369.00,242.20 370.00,241.29 371.00,240.48 372.00,239.68 373.00,238.88 374.00,238.08 375.00,237.28 376.00,236.48 377.00,235.75 378.00,235.13 379.00,234.50 380.00,233.88 381.00,233.26 382.00,232.64 383.00,232.15 384.00,231.98 385.00,231.80 386.00,231.63 387.00,231.46 388.00,231.29 389.00,231.11 390.00,230.94 391.00,230.77 392.00,230.79 393.00,230.94 394.00,231.10 395.00,231.25 396.00,231.40 397.00,231.55 398.00,231.70 399.00,231.86 400.00,232.01 401.00,232.16 402.00,232.31 403.00,232.46 404.00,232.62 405.00,232.77 406.00,232.92 407.00,233.07 408.00,233.22 409.00,233.38 410.00,233.53 411.00,233.68 412.00,233.83 413.00,233.98 414.00,234.14 415.00,234.29 416.00,234.44 417.00,234.59 418.00,234.74 419.00,234.90 420.00,235.05 421.00,235.20 422.00,235.35 423.00,235.50 424.00,235.66 425.00,235.81 426.00,235.96 427.00,236.11 428.00,236.26 429.00,236.42 430.00,236.57 431.00,236.72 432.00,236.87 433.00,237.02 434.00,237.18 435.00,237.33 436.00,237.48 437.00,237.63 438.00,237.78 439.00,237.94 440.00,238.09 441.00,238.24 442.00,238.39 443.00,238.54 444.00,238.70 445.00,238.85 446.00,239.00 447.00,239.15 448.00,239.30 449.00,239.46 450.00,239.61 451.00,239.76 452.00,239.91 453.00,240.06 454.00,240.22 455.00,240.37 456.00,240.52 457.00,240.67 458.00,240.82 459.00,240.98 460.00,241.13 461.00,241.28 462.00,241.43 463.00,241.58 464.00,241.74 465.00,241.89 466.00,242.04 467.00,242.19 468.00,242.34 469.00,242.50 470.00,242.65 471.00,242.80 472.00,242.95 473.00,243.10 474.00,243.26 475.00,243.41 476.00,243.56 477.00,243.71 478.00,243.86 479.00,244.02 480.00,244.17 481.00,244.32 482.00,244.47 483.00,244.62 484.00,244.78 485.00,244.93 486.00,245.08 487.00,245.23 488.00,245.38 489.00,245.54 490.00,245.69 491.00,245.84 492.00,245.99 493.00,246.14 494.00,246.30 495.00,246.45 496.00,246.60 497.00,246.75 498.00,246.90 499.00,247.06 500.00,247.21 501.00,247.36 502.00,247.51 503.00,247.66 504.00,247.82 505.00,247.97 506.00,248.12 507.00,248.27 508.00,248.42 509.00,248.58 510.00,248.73 511.00,248.88 512.00,249.03 513.00,249.18 514.00,249.34 515.00,249.49 516.00,249.64 517.00,249.79 518.00,249.94 519.00,250.10 520.00,250.25 521.00,250.40 522.00,250.55 523.00,250.70 524.00,250.86 525.00,251.01 526.00,251.16 527.00,251.31 528.00,251.46 529.00,251.62 530.00,251.77 531.00,251.92 532.00,252.07 533.00,252.22 534.00,252.38 535.00,252.53 536.00,252.68 537.00,252.83 538.00,252.98 539.00,253.14 540.00,253.29 541.00,253.44 542.00,253.59 543.00,253.74 544.00,253.90 545.00,254.05 546.00,254.20 547.00,254.35 548.00,254.50 549.00,254.66 550.00,254.81 551.00,254.96 552.00,255.11 553.00,255.26 554.00,255.42 555.00,255.57 556.00,255.72 557.00,255.87 558.00,256.02 559.00,256.18 560.00,256.33 561.00,256.48 562.00,256.63 563.00,256.78 564.00,256.94 565.00,257.09 566.00,257.24 567.00,257.39 568.00,257.54 569.00,257.70 570.00,257.85 571.00,258.00 572.00,258.15 573.00,258.30 574.00,258.46 575.00,258.61 576.00,258.76 577.00,258.91 578.00,259.06 579.00,259.22 580.00,259.37 581.00,259.52 582.00,259.67 583.00,259.82 584.00,259.98 585.00,260.13 586.00,260.28 587.00,260.43 588.00,260.58 589.00,260.74 590.00,260.89 591.00,261.04 592.00,261.19 593.00,261.34 594.00,261.50 595.00,261.65 596.00,261.80 597.00,261.95 598.00,262.10 599.00,262.26 600.00,262.41 601.00,262.56 602.00,262.71 603.00,262.86 604.00,263.02 605.00,263.17 606.00,263.32 607.00,263.47 608.00,263.62 609.00,263.78 610.00,263.93 611.00,264.08 612.00,264.23 613.00,264.38 614.00,264.54 615.00,264.69 616.00,264.84 617.00,264.99 618.00,265.14 619.00,265.30 620.00,265.45 621.00,265.60 622.00,265.75 623.00,265.90 624.00,266.06 625.00,266.21 626.00,266.36 627.00,266.51 628.00,266.66 629.00,266.82 630.00,266.97 631.00,267.12 632.00,267.27 633.00,267.42 634.00,267.58 635.00,267.73 636.00,267.88 637.00,268.03 638.00,268.18 639.00,268.34 640.00,268.49 641.00,268.64 642.00,268.79 643.00,268.94 644.00,269.10 645.00,269.25 646.00,269.40 647.00,269.55 648.00,269.70 649.00,269.86 650.00,270.01 651.00,270.16 652.00,270.31 653.00,270.46 654.00,270.62 655.00,270.77 656.00,270.92 657.00,271.07 658.00,271.22 659.00,271.38 660.00,271.53 661.00,271.68 662.00,271.83 663.00,271.98 664.00,272.14 665.00,272.29 666.00,272.44 667.00,272.59 668.00,272.74 669.00,272.90 670.00,273.05 671.00,273.20 672.00,273.35 673.00,273.50 674.00,273.66 675.00,273.81 676.00,273.96 677.00,274.11 678.00,274.26 679.00,274.42 680.00,274.57 681.00,274.72 682.00,274.87 683.00,275.02 684.00,275.18 685.00,275.33 686.00,275.48 687.00,275.63 688.00,275.78 689.00,275.94 690.00,276.09 691.00,276.24 692.00,276.39 693.00,276.54 694.00,276.70 695.00,276.85 696.00,277.00 697.00,277.15 698.00,277.30 699.00,277.46 700.00,277.61 701.00,277.76 702.00,277.91 703.00,278.06 704.00,278.22 705.00,278.37 706.00,278.52 707.00,278.67 708.00,278.82 709.00,278.98 710.00,279.13 711.00,279.28 712.00,279.43 713.00,279.58 714.00,279.74 715.00,279.89 716.00,280.04 717.00,280.19 718.00,280.34 719.00,280.50 720.00,280.65 721.00,280.80 722.00,280.95 723.00,281.10 724.00,281.26 725.00,281.41 726.00,281.56 727.00,281.71 728.00,281.86 729.00,282.02 730.00,282.17 731.00,282.32 732.00,282.47 733.00,282.62 734.00,282.78 735.00,282.93 736.00,283.08 737.00,283.23 738.00,283.38 739.00,283.54 740.00,283.69 741.00,283.84 742.00,283.99 743.00,284.14 744.00,284.30 745.00,284.45 746.00,284.60 747.00,284.75 748.00,284.90 749.00,285.06 750.00,285.21 751.00,285.36 752.00,285.51 753.00,285.66 754.00,285.82 755.00,285.97 756.00,286.12 757.00,286.27 758.00,286.42 759.00,286.58 760.00,286.73 761.00,286.88 762.00,287.03 763.00,287.18 764.00,287.34 765.00,287.49 766.00,287.64 767.00,287.79 768.00,287.94 769.00,288.10 770.00,288.25 771.00,288.40 772.00,288.55 773.00,288.70 774.00,288.86 775.00,289.01 776.00,289.16 777.00,289.31 778.00,289.46 779.00,289.62 780.00,289.77 781.00,289.92 782.00,290.07 783.00,290.22 784.00,290.38 785.00,290.53 786.00,290.68 787.00,290.83 788.00,290.98 789.00,291.14 790.00,291.29 791.00,291.44 792.00,291.59 793.00,291.74 794.00,291.90 795.00,292.05 796.00,292.20 797.00,292.35 798.00,292.50 799.00,292.66 800.00,292.81 801.00,292.96 802.00,293.11 803.00,293.26 804.00,293.42 805.00,293.57 806.00,293.72 807.00,293.87 808.00,294.02 809.00,294.18 810.00,294.33 811.00,294.48 812.00,294.63 813.00,294.78 814.00,294.94 815.00,295.09 816.00,295.24 817.00,295.39 818.00,295.54 819.00,295.70 820.00,295.85 821.00,296.00 822.00,296.15 823.00,296.30 824.00,296.46 825.00,296.61 826.00,296.76 827.00,296.91 828.00,297.06 829.00,297.22 830.00,297.37 831.00,297.52 832.00,297.67 833.00,297.82 834.00,297.98 835.00,298.13 836.00,298.28 837.00,298.43 838.00,298.58 839.00,298.74 840.00,298.89 841.00,299.04 842.00,299.19 843.00,299.34 844.00,299.50 845.00,299.65 846.00,299.80 847.00,299.95 848.00,300.10 849.00,300.26 850.00,300.41 851.00,300.56 852.00,300.71 853.00,300.86 854.00,301.02 855.00,301.17 856.00,301.32 857.00,301.47 858.00,301.62 859.00,301.78 860.00,301.93 861.00,302.08 862.00,302.23 863.00,302.38 864.00,302.54 865.00,302.69 866.00,302.84 867.00,302.99 868.00,303.14 869.00,303.28 870.00,303.42 871.00,303.57 872.00,303.70 873.00,303.84 874.00,303.97 875.00,304.10 876.00,304.23 877.00,304.36 878.00,304.48 879.00,304.60 880.00,304.72 881.00,304.84 882.00,304.96 883.00,305.07 884.00,305.18 885.00,305.29 886.00,305.39 887.00,305.49 888.00,305.60 889.00,305.69 890.00,305.79 891.00,305.88 892.00,305.97 893.00,306.06 894.00,306.15 895.00,306.23 896.00,306.32 897.00,306.40 898.00,306.57 899.00,306.49 900.00,306.41 901.00,306.33 902.00,306.25 903.00,306.01 904.00,305.54 905.00,305.06 906.00,304.59 907.00,304.12 908.00,303.64 909.00,303.17 910.00,302.69 911.00,301.90 912.00,301.03 913.00,300.15 914.00,299.28 915.00,298.40 916.00,297.53 917.00,296.60 918.00,295.60 919.00,294.60 920.00,293.60 921.00,292.60 922.00,291.60 923.00,290.60 924.00,289.60 925.00,288.45 926.00,287.21 927.00,285.96 928.00,284.71 929.00,283.47 930.00,282.22 931.00,280.98 932.00,279.73 933.00,278.48 934.00,277.24 935.00,275.99 936.00,274.75 937.00,273.50 938.00,271.80 939.00,270.10 940.00,268.39 941.00,266.69 942.00,264.99 943.00,263.29 944.00,261.59 945.00,259.88 946.00,258.18 947.00,256.80 948.00,255.65 949.00,254.49 950.00,253.33 951.00,252.17 952.00,251.01 953.00,249.85 954.00,248.70 955.00,247.64 956.00,246.73 957.00,245.82 958.00,244.92 959.00,244.01 960.00,243.10 961.00,242.20 962.00,241.29 963.00,240.48 964.00,239.68 965.00,238.88 966.00,238.08 967.00,237.28 968.00,236.48 969.00,235.75 970.00,235.13 971.00,234.50 972.00,233.88 973.00,233.26 974.00,232.64 975.00,232.15 976.00,231.98 977.00,231.80 978.00,231.63 979.00,231.46 980.00,231.29 981.00,231.11 982.00,230.94 983.00,230.77 984.00,230.79 985.00,230.94 986.00,231.10 987.00,231.25 988.00,231.40 989.00,231.55 990.00,231.70 991.00,231.86 992.00,232.01 993.00,232.16 994.00,232.31 995.00,232.46 996.00,232.62 997.00,232.77 998.00,232.92 999.00,233.07 1000.00,233.22 1001.00,233.38 1002.00,233.53 1003.00,233.68 1004.00,233.83 1005.00,233.98 1006.00,234.14 1007.00,234.29 1008.00,234.44 1009.00,234.59 1010.00,234.74 1011.00,234.90 1012.00,235.05 1013.00,235.20 1014.00,235.35 1015.00,235.50 1016.00,235.66 1017.00,235.81 1018.00,235.96 1019.00,236.11 1020.00,236.26 1021.00,236.42 1022.00,236.57 1023.00,236.72 1024.00,236.87 1025.00,237.02 1026.00,237.18 1027.00,237.33 1028.00,237.48 1029.00,237.63 1030.00,237.78 1031.00,237.94 1032.00,238.09 1033.00,238.24 1034.00,238.39 1035.00,238.54 1036.00,238.70 1037.00,238.85 1038.00,239.00 1039.00,239.15 1040.00,239.30 1041.00,239.46 1042.00,239.61 1043.00,239.76 1044.00,239.91 1045.00,240.06 1046.00,240.22 1047.00,240.37 1048.00,240.52 1049.00,240.67 1050.00,240.82 1051.00,240.98 1052.00,241.13 1053.00,241.28 1054.00,241.43 1055.00,241.58 1056.00,241.74 1057.00,241.89 1058.00,242.04 1059.00,242.19 1060.00,242.34 1061.00,242.50 1062.00,242.65 1063.00,242.80 1064.00,242.95 1065.00,243.10 1066.00,243.26 1067.00,243.41 1068.00,243.56 1069.00,243.71 1070.00,243.86 1071.00,244.02 1072.00,244.17 1073.00,244.32 1074.00,244.47 1075.00,244.62 1076.00,244.78 1077.00,244.93 1078.00,245.08 1079.00,245.23 1080.00,245.38 1081.00,245.54 1082.00,245.69 1083.00,245.84 1084.00,245.99 1085.00,246.14 1086.00,246.30 1087.00,246.45 1088.00,246.60 1089.00,246.75 1090.00,246.90 1091.00,247.06 1092.00,247.21 1093.00,247.36 1094.00,247.51 1095.00,247.66 1096.00,247.82 1097.00,247.97 1098.00,248.12 1099.00,248.27 1100.00,248.42 1101.00,248.58 1102.00,248.73 1103.00,248.88 1104.00,249.03 1105.00,249.18 1106.00,249.34 1107.00,249.49 1108.00,249.64 1109.00,249.79 1110.00,249.94 1111.00,250.10 1112.00,250.25 1113.00,250.40 1114.00,250.55 1115.00,250.70 1116.00,250.86 1117.00,251.01 1118.00,251.16 1119.00,251.31 1120.00,251.46 1121.00,251.62 1122.00,251.77 1123.00,251.92 1124.00,252.07 1125.00,252.22 1126.00,252.38 1127.00,252.53 1128.00,252.68 1129.00,252.83 1130.00,252.98 1131.00,253.14 1132.00,253.29 1133.00,253.44 1134.00,253.59 1135.00,253.74 1136.00,253.90 1137.00,254.05 1138.00,254.20 1139.00,254.35 1140.00,254.50 1141.00,254.66 1142.00,254.81 1143.00,254.96 1144.00,255.11 1145.00,255.26 1146.00,255.42 1147.00,255.57 1148.00,255.72 1149.00,255.87 1150.00,256.02 1151.00,256.18 1152.00,256.33 1153.00,256.48 1154.00,256.63 1155.00,256.78 1156.00,256.94 1157.00,257.09 1158.00,257.24 1159.00,257.39 1160.00,257.54 1161.00,257.70 1162.00,257.85 1163.00,258.00 1164.00,258.15 1165.00,258.30 1166.00,258.46 1167.00,258.61 1168.00,258.76 1169.00,258.91 1170.00,259.06 1171.00,259.22 1172.00,259.37 1173.00,259.52 1174.00,259.67 1175.00,259.82 1176.00,259.98 1177.00,260.13 1178.00,260.28 1179.00,260.43 1180.00,260.58 1181.00,260.74 1182.00,260.89 1183.00,261.04 1184.00,261.19 1185.00,261.34 1186.00,261.50 1187.00,261.65 1188.00,261.80 1189.00,261.95 1190.00,262.10 1191.00,262.26 1192.00,262.41 1193.00,262.56 1194.00,262.71 1195.00,262.86 1196.00,263.02 1197.00,263.17 1198.00,263.32 1199.00,263.47 1200.00,263.62 1201.00,263.78 1202.00,263.93 1203.00,264.08 1204.00,264.23 1205.00,264.38 1206.00,264.54 1207.00,264.69 1208.00,264.84 1209.00,264.99 1210.00,265.14 1211.00,265.30 1212.00,265.45 1213.00,265.60 1214.00,265.75 1215.00,265.90 1216.00,266.06 1217.00,266.21 1218.00,266.36 1219.00,266.51 1220.00,266.66 1221.00,266.82 1222.00,266.97 1223.00,267.12 1224.00,267.27 1225.00,267.42 1226.00,267.58 1227.00,267.73 1228.00,267.88 1229.00,268.03 1230.00,268.18 1231.00,268.34 1232.00,268.49 1233.00,268.64 1234.00,268.79 1235.00,268.94 1236.00,269.10 1237.00,269.25 1238.00,269.40 1239.00,269.55 1240.00,269.70" fill="none" stroke="#f2f2f2" stroke-width="1.15" stroke-linejoin="round"/>
</g>
<path d="M786.4,725.0 H801.4 V791.4 H786.4 Z M782.4,747.6 H817.6999999999999 V760.8 H782.4 Z M801.4,779.1 H817.6999999999999 V791.4 H801.4 Z M824.6999999999999,747.6 H871.4 V791.4 H832.6999999999999 L824.6999999999999,783.4 Z M879.1,730.1 H894.5 V791.4 H879.1 Z M894.5,747.6 H923.9 V760.8 H894.5 Z M907.8,760.8 H923.9 V791.4 H907.8 Z M931.9,747.6 H976.1 V760.8 H931.9 Z M931.9,760.8 H947.3 V791.4 H931.9 Z M959.4,760.8 H976.1 V791.4 H959.4 Z M986.1,747.6 H1033.6000000000001 V791.4 H994.1 L986.1,783.4 Z M1041.1000000000001,747.4 H1054.8000000000002 V791.4 H1041.1000000000001 Z M1054.8000000000002,747.4 H1074.8000000000002 V764.4 H1054.8000000000002 Z M1084.4,748.9 H1099.9 V791.4 H1084.4 Z M1086.4,736.1 H1100.4 V745.1999999999999 H1086.4 Z M1108.1000000000001,773.0 H1128.7 V791.4 H1108.1000000000001 Z M1136.6000000000001,748.1999999999999 H1150.8000000000002 V790.4 H1136.6000000000001 Z M1150.8000000000002,748.1999999999999 H1170.2 V764.4 H1150.8000000000002 Z M1180.5,748.1999999999999 H1195.6000000000001 V790.4 H1180.5 Z M1208.7,748.1999999999999 H1223.3000000000002 V790.4 H1208.7 Z M1180.5,777.9 H1223.3000000000002 V790.4 H1188.5 L1180.5,782.4 Z" fill="#868e95"/>
<clipPath id="wmc"><path d="M784,722.6 H799 V789 H784 Z M780,745.2 H815.3 V758.4 H780 Z M799,776.7 H815.3 V789 H799 Z M822.3,745.2 H869 V789 H830.3 L822.3,781 Z M876.7,727.7 H892.1 V789 H876.7 Z M892.1,745.2 H921.5 V758.4 H892.1 Z M905.4,758.4 H921.5 V789 H905.4 Z M929.5,745.2 H973.7 V758.4 H929.5 Z M929.5,758.4 H944.9 V789 H929.5 Z M957,758.4 H973.7 V789 H957 Z M983.7,745.2 H1031.2 V789 H991.7 L983.7,781 Z M1038.7,745 H1052.4 V789 H1038.7 Z M1052.4,745 H1072.4 V762 H1052.4 Z M1082,746.5 H1097.5 V789 H1082 Z M1084,733.7 H1098 V742.8 H1084 Z M1105.7,770.6 H1126.3 V789 H1105.7 Z M1134.2,745.8 H1148.4 V788 H1134.2 Z M1148.4,745.8 H1167.8 V762 H1148.4 Z M1178.1,745.8 H1193.2 V788 H1178.1 Z M1206.3,745.8 H1220.9 V788 H1206.3 Z M1178.1,775.5 H1220.9 V788 H1186.1 L1178.1,780 Z"/></clipPath>
<g clip-path="url(#wmc)"><rect x="770" y="720" width="460" height="42.5" fill="#cfdfeb"/><rect x="770" y="762.5" width="460" height="37.5" fill="#90bfe1"/>
<rect x="770" y="761.5" width="460" height="1.2" fill="#eef6fb"/>
</g>
<path d="M836,757.5 H854 M837.5,757 V775.5" stroke="#868e95" stroke-width="2" fill="none"/>
<path d="M838,776.5 H869" stroke="#f4f8fb" stroke-width="1.2" fill="none"/>
<path d="M987,758 H1015 M1015,757 V776" stroke="#868e95" stroke-width="2" fill="none"/>
<path d="M997,776.5 H1014" stroke="#f4f8fb" stroke-width="1.2" fill="none"/>
<circle cx="790.5" cy="751.5" r="3.6" fill="none" stroke="#9cc4cc" stroke-width="1.4"/><line x1="788.3" y1="753.7" x2="792.7" y2="749.3" stroke="#9cc4cc" stroke-width="1.4"/>
<circle cx="830" cy="751.5" r="3.6" fill="none" stroke="#9cc4cc" stroke-width="1.4"/><line x1="827.8" y1="753.7" x2="832.2" y2="749.3" stroke="#9cc4cc" stroke-width="1.4"/>
<circle cx="885.5" cy="751.5" r="3.6" fill="none" stroke="#9cc4cc" stroke-width="1.4"/><line x1="883.3" y1="753.7" x2="887.7" y2="749.3" stroke="#9cc4cc" stroke-width="1.4"/>
<circle cx="935.5" cy="751.5" r="3.6" fill="none" stroke="#9cc4cc" stroke-width="1.4"/><line x1="933.3" y1="753.7" x2="937.7" y2="749.3" stroke="#9cc4cc" stroke-width="1.4"/>
<circle cx="1021.7" cy="781.2" r="3.6" fill="none" stroke="#9cc4cc" stroke-width="1.4"/><line x1="1019.5" y1="783.4000000000001" x2="1023.9000000000001" y2="779.0" stroke="#9cc4cc" stroke-width="1.4"/>
<circle cx="1045" cy="751.2" r="3.6" fill="none" stroke="#9cc4cc" stroke-width="1.4"/><line x1="1042.8" y1="753.4000000000001" x2="1047.2" y2="749.0" stroke="#9cc4cc" stroke-width="1.4"/>
<circle cx="1140" cy="751.5" r="3.6" fill="none" stroke="#9cc4cc" stroke-width="1.4"/><line x1="1137.8" y1="753.7" x2="1142.2" y2="749.3" stroke="#9cc4cc" stroke-width="1.4"/>
<circle cx="1213" cy="781.3" r="3.6" fill="none" stroke="#9cc4cc" stroke-width="1.4"/><line x1="1210.8" y1="783.5" x2="1215.2" y2="779.0999999999999" stroke="#9cc4cc" stroke-width="1.4"/>
<rect x="113.5" y="384.5" width="330" height="223" fill="none" stroke="#d21ad8" stroke-width="3"/>
<rect x="586.5" y="365.5" width="158" height="71" fill="none" stroke="#d21ad8" stroke-width="3"/>
<polygon points="171.6,421.5 177.1,415.5 194.7,415.5 200.2,421.5 194.7,427.5 177.1,427.5" fill="none" stroke="#14146e" stroke-width="1"/>
<text transform="translate(180.4,425.2) scale(1,1.08)" font-size="9.5" fill="#1a1a1a" stroke="#1a1a1a" stroke-width="0.32" textLength="12.6" lengthAdjust="spacingAndGlyphs" >V1</text>
<polygon points="157.3,539.5 162.8,533.5 181.9,533.5 187.4,539.5 181.9,545.5 162.8,545.5" fill="none" stroke="#14146e" stroke-width="1"/>
<text transform="translate(166.4,543.2) scale(1,1.08)" font-size="9.5" fill="#1a1a1a" stroke="#1a1a1a" stroke-width="0.32" textLength="13.6" lengthAdjust="spacingAndGlyphs" >V2</text>
<rect x="200" y="421" width="59" height="1" fill="#14146e"/>
<rect x="269" y="421" width="9" height="1" fill="#14146e"/>
<rect x="277" y="421" width="1" height="42" fill="#14146e"/>
<rect x="221" y="421" width="1" height="91" fill="#14146e"/>
<rect x="221" y="511" width="38" height="1" fill="#14146e"/>
<rect x="235" y="462" width="24" height="1" fill="#14146e"/>
<rect x="269" y="462" width="121" height="1" fill="#14146e"/>
<rect x="389" y="462" width="1" height="14" fill="#14146e"/>
<rect x="235" y="462" width="1" height="78" fill="#14146e"/>
<rect x="187" y="539" width="72" height="1" fill="#14146e"/>
<rect x="270" y="539" width="120" height="1" fill="#14146e"/>
<rect x="270" y="511" width="22" height="1" fill="#14146e"/>
<rect x="291" y="511" width="1" height="29" fill="#14146e"/>
<polygon points="258.6,414.7 269.2,421.5 258.6,428.3" fill="none" stroke="#14146e" stroke-width="1"/>
<rect x="268.7" y="414.0" width="1" height="15" fill="#14146e"/>
<polygon points="258.6,455.7 269.2,462.5 258.6,469.3" fill="none" stroke="#14146e" stroke-width="1"/>
<rect x="268.7" y="455.0" width="1" height="15" fill="#14146e"/>
<polygon points="269.6,504.7 258.5,511.5 269.6,518.3" fill="none" stroke="#14146e" stroke-width="1"/>
<rect x="258.0" y="504.0" width="1" height="15" fill="#14146e"/>
<polygon points="269.6,532.7 258.5,539.5 269.6,546.3" fill="none" stroke="#14146e" stroke-width="1"/>
<rect x="258.0" y="532.0" width="1" height="15" fill="#14146e"/>
<rect x="305" y="462" width="1" height="14" fill="#14146e"/>
<rect x="298" y="475" width="15" height="1" fill="#14146e"/>
<rect x="298" y="478" width="15" height="1" fill="#14146e"/>
<rect x="305" y="478" width="1" height="62" fill="#14146e"/>
<rect x="361" y="462" width="1" height="43" fill="#14146e"/>
<rect x="357.30" y="469" width="8.60" height="21.70" fill="#0c0c78"/>
<rect x="361" y="504" width="1" height="36" fill="#14146e"/>
<rect x="357.30" y="511.4" width="8.60" height="21.10" fill="#0c0c78"/>
<rect x="361" y="504" width="50" height="1" fill="#14146e"/>
<rect x="410" y="504" width="1" height="22" fill="#14146e"/>
<polygon points="402.5,525.5 418.5,525.5 410.5,533.5" fill="none" stroke="#14146e" stroke-width="1"/>
<rect x="382" y="475" width="15" height="1" fill="#14146e"/>
<rect x="382" y="478" width="15" height="1" fill="#14146e"/>
<rect x="389" y="478" width="1" height="27" fill="#14146e"/>
<rect x="389" y="504" width="1" height="21" fill="#14146e"/>
<rect x="382" y="524" width="15" height="1" fill="#14146e"/>
<rect x="382" y="527" width="15" height="1" fill="#14146e"/>
<rect x="389" y="527" width="1" height="13" fill="#14146e"/>
<rect x="361" y="539" width="1" height="29" fill="#14146e"/>
<polygon points="355.3,438.6 367.7,438.6 367.7,456.4 361.5,461 355.3,456.4" fill="none" stroke="#14146e" stroke-width="1"/>
<text transform="translate(364.7,449.0) rotate(-90) scale(0.9,1)" text-anchor="middle" font-size="10" fill="#1a1a1a" stroke="#1a1a1a" stroke-width="0.3">V+</text>
<polygon points="361.5,567.6 367.5,573 367.5,588.3 361.5,594.3 355.5,588.3 355.5,573" fill="none" stroke="#14146e" stroke-width="1"/>
<text transform="translate(364.7,580.95) rotate(-90) scale(0.9,1)" text-anchor="middle" font-size="10" fill="#1a1a1a" stroke="#1a1a1a" stroke-width="0.3">V-</text>
<rect x="219" y="419" width="5" height="5" fill="#dc1a55"/>
<rect x="275" y="460" width="5" height="5" fill="#dc1a55"/>
<rect x="303" y="460" width="5" height="5" fill="#dc1a55"/>
<rect x="359" y="460" width="5" height="5" fill="#dc1a55"/>
<rect x="233" y="537" width="5" height="5" fill="#dc1a55"/>
<rect x="289" y="537" width="5" height="5" fill="#dc1a55"/>
<rect x="303" y="537" width="5" height="5" fill="#dc1a55"/>
<rect x="359" y="537" width="5" height="5" fill="#dc1a55"/>
<rect x="359" y="502" width="5" height="5" fill="#dc1a55"/>
<rect x="387" y="502" width="5" height="5" fill="#dc1a55"/>
<text transform="translate(255.8,411.5) scale(1,1.08)" font-size="9.8" fill="#1a1a1a" stroke="#1a1a1a" stroke-width="0.32" textLength="13.8" lengthAdjust="spacingAndGlyphs" >D2</text>
<text transform="translate(241.5,437.5) scale(1,1.08)" font-size="9.8" fill="#1a1a1a" stroke="#1a1a1a" stroke-width="0.32" textLength="43.0" lengthAdjust="spacingAndGlyphs" >MUR460</text>
<text transform="translate(255.8,452.6) scale(1,1.08)" font-size="9.8" fill="#1a1a1a" stroke="#1a1a1a" stroke-width="0.32" textLength="13.8" lengthAdjust="spacingAndGlyphs" >D1</text>
<text transform="translate(241.5,478.6) scale(1,1.08)" font-size="9.8" fill="#1a1a1a" stroke="#1a1a1a" stroke-width="0.32" textLength="43.0" lengthAdjust="spacingAndGlyphs" >MUR460</text>
<text transform="translate(255.7,501.3) scale(1,1.08)" font-size="9.8" fill="#1a1a1a" stroke="#1a1a1a" stroke-width="0.32" textLength="13.6" lengthAdjust="spacingAndGlyphs" >D3</text>
<text transform="translate(241.5,527.7) scale(1,1.08)" font-size="9.8" fill="#1a1a1a" stroke="#1a1a1a" stroke-width="0.32" textLength="43.0" lengthAdjust="spacingAndGlyphs" >MUR460</text>
<text transform="translate(255.7,529.6) scale(1,1.08)" font-size="9.8" fill="#1a1a1a" stroke="#1a1a1a" stroke-width="0.32" textLength="14.5" lengthAdjust="spacingAndGlyphs" >D4</text>
<text transform="translate(241.5,555.7) scale(1,1.08)" font-size="9.8" fill="#1a1a1a" stroke="#1a1a1a" stroke-width="0.32" textLength="43.0" lengthAdjust="spacingAndGlyphs" >MUR460</text>
<text transform="translate(309.5,469.5) scale(1,1.08)" font-size="9.8" fill="#1a1a1a" stroke="#1a1a1a" stroke-width="0.32" textLength="20.2" lengthAdjust="spacingAndGlyphs" >C10</text>
<text transform="translate(331.5,476.6) scale(1,1.08)" font-size="9.8" fill="#1a1a1a" stroke="#1a1a1a" stroke-width="0.32" textLength="20.2" lengthAdjust="spacingAndGlyphs" >R18</text>
<text transform="translate(309.5,490.5) scale(1,1.08)" font-size="9.8" fill="#1a1a1a" stroke="#1a1a1a" stroke-width="0.32" textLength="40.9" lengthAdjust="spacingAndGlyphs" >20000µ</text>
<text transform="translate(367.4,493.8) scale(1,1.08)" font-size="9.8" fill="#1a1a1a" stroke="#1a1a1a" stroke-width="0.32" textLength="19.5" lengthAdjust="spacingAndGlyphs" >10k</text>
<text transform="translate(393.5,469.5) scale(1,1.08)" font-size="9.8" fill="#1a1a1a" stroke="#1a1a1a" stroke-width="0.32" textLength="12.9" lengthAdjust="spacingAndGlyphs" >C9</text>
<text transform="translate(393.9,495.0) scale(1,1.08)" font-size="9.8" fill="#1a1a1a" stroke="#1a1a1a" stroke-width="0.32" textLength="39.6" lengthAdjust="spacingAndGlyphs" >10000µ</text>
<text transform="translate(331.5,518.5) scale(1,1.08)" font-size="9.8" fill="#1a1a1a" stroke="#1a1a1a" stroke-width="0.32" textLength="20.0" lengthAdjust="spacingAndGlyphs" >R19</text>
<text transform="translate(332.1,534.8) scale(1,1.08)" font-size="9.8" fill="#1a1a1a" stroke="#1a1a1a" stroke-width="0.32" textLength="19.7" lengthAdjust="spacingAndGlyphs" >10k</text>
<text transform="translate(393.3,518.5) scale(1,1.08)" font-size="9.8" fill="#1a1a1a" stroke="#1a1a1a" stroke-width="0.32" textLength="13.4" lengthAdjust="spacingAndGlyphs" >C8</text>
<text transform="translate(394.0,539.5) scale(1,1.08)" font-size="9.8" fill="#1a1a1a" stroke="#1a1a1a" stroke-width="0.32" textLength="39.8" lengthAdjust="spacingAndGlyphs" >10000µ</text>
<polygon points="597.3,386.5 602.8,380.5 621.9,380.5 627.4,386.5 621.9,392.5 602.8,392.5" fill="none" stroke="#14146e" stroke-width="1"/>
<text transform="translate(607.2,389.8) scale(1,1.08)" font-size="9.5" fill="#1a1a1a" stroke="#1a1a1a" stroke-width="0.32" textLength="13.2" lengthAdjust="spacingAndGlyphs" >V1</text>
<polygon points="597.3,421.5 602.8,415.5 621.9,415.5 627.4,421.5 621.9,427.5 602.8,427.5" fill="none" stroke="#14146e" stroke-width="1"/>
<text transform="translate(607.2,424.8) scale(1,1.08)" font-size="9.5" fill="#1a1a1a" stroke="#1a1a1a" stroke-width="0.32" textLength="13.2" lengthAdjust="spacingAndGlyphs" >V2</text>
<rect x="627" y="386" width="78" height="1" fill="#14146e"/>
<rect x="704" y="386" width="1" height="11" fill="#14146e"/>
<rect x="688" y="396" width="32" height="2" fill="#14146e"/>
<rect x="693" y="401" width="21" height="3" fill="#14146e"/>
<rect x="704" y="403" width="1" height="19" fill="#14146e"/>
<rect x="627" y="421" width="78" height="1" fill="#14146e"/>
<text transform="translate(706.0,393.3) scale(1,1.08)" font-size="9.8" fill="#1a1a1a" stroke="#1a1a1a" stroke-width="0.32" textLength="13.5" lengthAdjust="spacingAndGlyphs" >V3</text>
<rect x="466" y="455" width="462" height="1" fill="#14146e"/>
<polygon points="802.3,431.5 814.7,431.5 814.7,450 808.5,455 802.3,450" fill="none" stroke="#14146e" stroke-width="1"/>
<text transform="translate(811.7,442.25) rotate(-90) scale(0.9,1)" text-anchor="middle" font-size="10" fill="#1a1a1a" stroke="#1a1a1a" stroke-width="0.3">V+</text>
<rect x="466" y="455" width="1" height="172" fill="#14146e"/>
<rect x="462.00" y="476.2" width="9.00" height="21.40" fill="#0c0c78"/>
<rect x="536" y="455" width="1" height="172" fill="#14146e"/>
<rect x="466" y="525" width="223" height="1" fill="#14146e"/>
<rect x="571" y="521.30" width="21.90" height="8.6" fill="#0c0c78"/>
<rect x="627.2" y="521.30" width="21.70" height="8.6" fill="#0c0c78"/>
<rect x="557" y="476" width="1" height="50" fill="#14146e"/>
<rect x="557" y="476" width="27" height="1" fill="#14146e"/>
<rect x="586" y="476" width="21" height="1" fill="#14146e"/>
<rect x="606" y="476" width="1" height="50" fill="#14146e"/>
<rect x="583" y="469" width="1" height="15" fill="#14146e"/>
<rect x="586" y="469" width="1" height="15" fill="#14146e"/>
<rect x="662" y="525" width="1" height="36" fill="#14146e"/>
<rect x="662" y="560" width="20" height="1" fill="#14146e"/>
<rect x="684" y="560" width="166" height="1" fill="#14146e"/>
<rect x="681" y="554" width="1" height="14" fill="#14146e"/>
<rect x="684" y="554" width="1" height="14" fill="#14146e"/>
<rect x="704" y="455" width="1" height="56" fill="#14146e"/>
<rect x="700.30" y="468.8" width="7.70" height="21.90" fill="#0c0c78"/>
<rect x="687.5" y="518.5" width="3" height="14" fill="none" stroke="#14146e" stroke-width="1"/>
<ellipse cx="700.0" cy="527.0" rx="18.6" ry="17.3" fill="none" stroke="#14146e" stroke-width="1"/>
<line x1="690.5" y1="525" x2="704.5" y2="510.5" stroke="#14146e" stroke-width="1"/>
<line x1="690.5" y1="526" x2="704.5" y2="543.5" stroke="#14146e" stroke-width="1"/>
<polyline points="696.84,523.12 692.24,523.20 692.16,518.60" fill="none" stroke="#14146e" stroke-width="1"/>
<rect x="704" y="543" width="1" height="228" fill="#14146e"/>
<rect x="700.30" y="573.9" width="7.70" height="21.90" fill="#0c0c78"/>
<rect x="700.30" y="657.9" width="7.70" height="21.50" fill="#0c0c78"/>
<rect x="700.30" y="714.1" width="7.70" height="21.70" fill="#0c0c78"/>
<rect x="704" y="609" width="54" height="1" fill="#14146e"/>
<rect x="756.5" y="602.5" width="3" height="14" fill="none" stroke="#14146e" stroke-width="1"/>
<ellipse cx="769.0" cy="607.5" rx="18.6" ry="17.3" fill="none" stroke="#14146e" stroke-width="1"/>
<line x1="759.5" y1="609" x2="773.5" y2="590.5" stroke="#14146e" stroke-width="1"/>
<line x1="759.5" y1="610" x2="773.5" y2="624.5" stroke="#14146e" stroke-width="1"/>
<polyline points="771.84,618.10 771.76,622.70 767.16,622.62" fill="none" stroke="#14146e" stroke-width="1"/>
<rect x="773" y="560" width="1" height="31" fill="#14146e"/>
<rect x="773" y="624" width="1" height="70" fill="#14146e"/>
<rect x="704" y="693" width="112" height="1" fill="#14146e"/>
<rect x="815" y="560" width="1" height="48" fill="#14146e"/>
<rect x="808" y="607" width="15" height="1" fill="#14146e"/>
<rect x="808" y="611" width="15" height="1" fill="#14146e"/>
<rect x="815" y="611" width="1" height="97" fill="#14146e"/>
<rect x="815" y="707" width="35" height="1" fill="#14146e"/>
<rect x="361" y="644" width="13" height="1" fill="#14146e"/>
<rect x="377" y="644" width="73" height="1" fill="#14146e"/>
<rect x="373" y="637" width="1" height="15" fill="#14146e"/>
<rect x="377" y="637" width="1" height="15" fill="#14146e"/>
<rect x="361" y="644" width="1" height="32" fill="#14146e"/>
<rect x="345" y="675" width="32" height="2" fill="#14146e"/>
<rect x="352" y="680" width="18" height="4" fill="#14146e"/>
<rect x="361" y="684" width="1" height="38" fill="#14146e"/>
<polygon points="353.5,721.5 369.5,721.5 361.5,729.5" fill="none" stroke="#14146e" stroke-width="1"/>
<rect x="424" y="644" width="1" height="36" fill="#14146e"/>
<rect x="420.40" y="651.6" width="8.20" height="21.40" fill="#0c0c78"/>
<polygon points="416.5,679.5 432.5,679.5 424.5,687.5" fill="none" stroke="#14146e" stroke-width="1"/>
<rect x="449.5" y="637.5" width="3" height="14" fill="none" stroke="#14146e" stroke-width="1"/>
<ellipse cx="462.0" cy="642.5" rx="18.6" ry="17.3" fill="none" stroke="#14146e" stroke-width="1"/>
<line x1="452.5" y1="644" x2="466.5" y2="626.5" stroke="#14146e" stroke-width="1"/>
<line x1="452.5" y1="645" x2="466.5" y2="658.5" stroke="#14146e" stroke-width="1"/>
<polyline points="464.62,652.17 464.70,656.76 460.10,656.85" fill="none" stroke="#14146e" stroke-width="1"/>
<rect x="550.5" y="637.5" width="3" height="14" fill="none" stroke="#14146e" stroke-width="1"/>
<ellipse cx="541.0" cy="642.5" rx="18.6" ry="17.3" fill="none" stroke="#14146e" stroke-width="1"/>
<line x1="550.5" y1="644" x2="536.5" y2="626.5" stroke="#14146e" stroke-width="1"/>
<line x1="550.5" y1="645" x2="536.5" y2="658.5" stroke="#14146e" stroke-width="1"/>
<polyline points="542.90,656.85 538.30,656.76 538.38,652.17" fill="none" stroke="#14146e" stroke-width="1"/>
<rect x="466" y="658" width="1" height="29" fill="#14146e"/>
<rect x="466" y="686" width="71" height="1" fill="#14146e"/>
<rect x="536" y="658" width="1" height="29" fill="#14146e"/>
<rect x="501" y="686" width="1" height="85" fill="#14146e"/>
<rect x="497.00" y="721" width="8.60" height="21.90" fill="#0c0c78"/>
<rect x="501" y="770" width="469" height="1" fill="#14146e"/>
<rect x="553" y="644" width="529" height="1" fill="#14146e"/>
<rect x="578" y="644" width="1" height="92" fill="#14146e"/>
<rect x="574.30" y="665.2" width="8.60" height="21.50" fill="#0c0c78"/>
<polygon points="570.5,735.5 586.5,735.5 578.5,743.5" fill="none" stroke="#14146e" stroke-width="1"/>
<rect x="620.3" y="640.30" width="21.70" height="8.6" fill="#0c0c78"/>
<rect x="864" y="455" width="1" height="85" fill="#14146e"/>
<rect x="860.10" y="462" width="8.80" height="21.90" fill="#0c0c78"/>
<rect x="864" y="539" width="47" height="1" fill="#14146e"/>
<rect x="910.5" y="532.5" width="3" height="14" fill="none" stroke="#14146e" stroke-width="1"/>
<ellipse cx="923.0" cy="541.5" rx="18.6" ry="17.3" fill="none" stroke="#14146e" stroke-width="1"/>
<line x1="913.5" y1="539" x2="927.5" y2="524.5" stroke="#14146e" stroke-width="1"/>
<line x1="913.5" y1="540" x2="927.5" y2="558.5" stroke="#14146e" stroke-width="1"/>
<polyline points="919.84,537.12 915.24,537.20 915.16,532.60" fill="none" stroke="#14146e" stroke-width="1"/>
<rect x="927" y="455" width="1" height="70" fill="#14146e"/>
<rect x="847.5" y="553.5" width="3" height="14" fill="none" stroke="#14146e" stroke-width="1"/>
<ellipse cx="860.0" cy="558.5" rx="18.6" ry="17.3" fill="none" stroke="#14146e" stroke-width="1"/>
<line x1="850.5" y1="560" x2="864.5" y2="541.5" stroke="#14146e" stroke-width="1"/>
<line x1="850.5" y1="561" x2="864.5" y2="575.5" stroke="#14146e" stroke-width="1"/>
<polyline points="862.84,569.10 862.76,573.70 858.16,573.62" fill="none" stroke="#14146e" stroke-width="1"/>
<rect x="864" y="539" width="1" height="3" fill="#14146e"/>
<rect x="864" y="575" width="1" height="28" fill="#14146e"/>
<rect x="864" y="602" width="64" height="1" fill="#14146e"/>
<rect x="927" y="558" width="1" height="138" fill="#14146e"/>
<rect x="922.90" y="616.3" width="9.00" height="21.10" fill="#0c0c78"/>
<rect x="922.90" y="658.6" width="9.00" height="20.90" fill="#0c0c78"/>
<rect x="847.5" y="700.5" width="3" height="14" fill="none" stroke="#14146e" stroke-width="1"/>
<ellipse cx="860.0" cy="708.5" rx="18.6" ry="17.3" fill="none" stroke="#14146e" stroke-width="1"/>
<line x1="850.5" y1="707" x2="864.5" y2="692.5" stroke="#14146e" stroke-width="1"/>
<line x1="850.5" y1="708" x2="864.5" y2="724.5" stroke="#14146e" stroke-width="1"/>
<polyline points="856.84,705.12 852.24,705.20 852.16,700.60" fill="none" stroke="#14146e" stroke-width="1"/>
<rect x="864" y="686" width="1" height="7" fill="#14146e"/>
<rect x="864" y="686" width="50" height="1" fill="#14146e"/>
<rect x="913" y="686" width="1" height="8" fill="#14146e"/>
<rect x="913" y="693" width="15" height="1" fill="#14146e"/>
<rect x="864" y="724" width="1" height="47" fill="#14146e"/>
<rect x="860.3" y="742" width="8.3" height="20.7" fill="#3c4aa8"/>
<rect x="864" y="735" width="36" height="1" fill="#14146e"/>
<rect x="899" y="714" width="1" height="22" fill="#14146e"/>
<rect x="899" y="714" width="12" height="1" fill="#14146e"/>
<rect x="910.5" y="707.5" width="3" height="14" fill="none" stroke="#14146e" stroke-width="1"/>
<ellipse cx="923.0" cy="712.5" rx="18.6" ry="17.3" fill="none" stroke="#14146e" stroke-width="1"/>
<line x1="913.5" y1="714" x2="927.5" y2="695.5" stroke="#14146e" stroke-width="1"/>
<line x1="913.5" y1="715" x2="927.5" y2="729.5" stroke="#14146e" stroke-width="1"/>
<polyline points="925.84,723.10 925.76,727.70 921.16,727.62" fill="none" stroke="#14146e" stroke-width="1"/>
<rect x="927" y="729" width="1" height="42" fill="#14146e"/>
<polygon points="948.5,744.2 954.7,750.4 954.7,764.3 948.5,770.1 942.3,764.3 942.3,750.4" fill="none" stroke="#14146e" stroke-width="1"/>
<text transform="translate(951.7,757.2) rotate(-90) scale(0.9,1)" text-anchor="middle" font-size="10" fill="#1a1a1a" stroke="#1a1a1a" stroke-width="0.3">V-</text>
<rect x="1018" y="511" width="29" height="1" fill="#14146e"/>
<rect x="1018" y="511" width="1" height="134" fill="#14146e"/>
<rect x="1014.10" y="588.3" width="8.70" height="21.30" fill="#0c0c78"/>
<rect x="1046" y="475" width="1" height="15" fill="#14146e"/>
<rect x="1039" y="489" width="15" height="1" fill="#14146e"/>
<rect x="1039" y="492" width="15" height="1" fill="#14146e"/>
<rect x="1046" y="492" width="1" height="40" fill="#14146e"/>
<rect x="1039" y="531" width="15" height="1" fill="#14146e"/>
<rect x="1039" y="534" width="15" height="1" fill="#14146e"/>
<rect x="1046" y="534" width="1" height="14" fill="#14146e"/>
<polygon points="1040.3,452.7 1052.7,452.7 1052.7,470.2 1046.5,475.6 1040.3,470.2" fill="none" stroke="#14146e" stroke-width="1"/>
<text transform="translate(1049.7,462.95) rotate(-90) scale(0.9,1)" text-anchor="middle" font-size="10" fill="#1a1a1a" stroke="#1a1a1a" stroke-width="0.3">V+</text>
<polygon points="1046.5,546.7 1052.5,553.9 1052.5,566.6 1046.5,574 1040.5,566.6 1040.5,553.9" fill="none" stroke="#14146e" stroke-width="1"/>
<text transform="translate(1049.7,560.35) rotate(-90) scale(0.9,1)" text-anchor="middle" font-size="10" fill="#1a1a1a" stroke="#1a1a1a" stroke-width="0.3">V-</text>
<rect x="1081" y="644" width="1" height="76" fill="#14146e"/>
<rect x="1077.00" y="679.2" width="9.00" height="21.30" fill="#0c0c78"/>
<rect x="1074" y="719" width="15" height="1" fill="#14146e"/>
<rect x="1074" y="723" width="15" height="1" fill="#14146e"/>
<rect x="1081" y="723" width="1" height="13" fill="#14146e"/>
<polygon points="1073.5,735.5 1089.5,735.5 1081.5,743.5" fill="none" stroke="#14146e" stroke-width="1"/>
<rect x="534" y="453" width="5" height="5" fill="#dc1a55"/>
<rect x="702" y="453" width="5" height="5" fill="#dc1a55"/>
<rect x="862" y="453" width="5" height="5" fill="#dc1a55"/>
<rect x="464" y="523" width="5" height="5" fill="#dc1a55"/>
<rect x="555" y="523" width="5" height="5" fill="#dc1a55"/>
<rect x="604" y="523" width="5" height="5" fill="#dc1a55"/>
<rect x="660" y="523" width="5" height="5" fill="#dc1a55"/>
<rect x="702" y="558" width="5" height="5" fill="#dc1a55"/>
<rect x="771" y="558" width="5" height="5" fill="#dc1a55"/>
<rect x="813" y="558" width="5" height="5" fill="#dc1a55"/>
<rect x="702" y="607" width="5" height="5" fill="#dc1a55"/>
<rect x="702" y="691" width="5" height="5" fill="#dc1a55"/>
<rect x="771" y="691" width="5" height="5" fill="#dc1a55"/>
<rect x="813" y="691" width="5" height="5" fill="#dc1a55"/>
<rect x="422" y="642" width="5" height="5" fill="#dc1a55"/>
<rect x="499" y="684" width="5" height="5" fill="#dc1a55"/>
<rect x="576" y="642" width="5" height="5" fill="#dc1a55"/>
<rect x="702" y="768" width="5" height="5" fill="#dc1a55"/>
<rect x="862" y="768" width="5" height="5" fill="#dc1a55"/>
<rect x="925" y="768" width="5" height="5" fill="#dc1a55"/>
<rect x="862" y="537" width="5" height="5" fill="#dc1a55"/>
<rect x="925" y="600" width="5" height="5" fill="#dc1a55"/>
<rect x="925" y="642" width="5" height="5" fill="#dc1a55"/>
<rect x="925" y="691" width="5" height="5" fill="#dc1a55"/>
<rect x="862" y="733" width="5" height="5" fill="#dc1a55"/>
<rect x="1016" y="642" width="5" height="5" fill="#dc1a55"/>
<rect x="1044" y="509" width="5" height="5" fill="#dc1a55"/>
<rect x="1079" y="670" width="5" height="5" fill="#dc1a55"/>
<text transform="translate(344.6,801.4) scale(1,1.08)" font-size="8.6" fill="#1a1a1a" stroke="#1a1a1a" stroke-width="0.32" textLength="62.9" lengthAdjust="spacingAndGlyphs" >.tran 0 1 0.9</text>
<text transform="translate(475.4,483.6) scale(1,1.08)" font-size="9.8" fill="#1a1a1a" stroke="#1a1a1a" stroke-width="0.32" textLength="13.4" lengthAdjust="spacingAndGlyphs" >R2</text>
<text transform="translate(475.4,499.6) scale(1,1.08)" font-size="9.8" fill="#1a1a1a" stroke="#1a1a1a" stroke-width="0.32" textLength="23.8" lengthAdjust="spacingAndGlyphs" >1.3k</text>
<text transform="translate(578.4,466.6) scale(1,1.08)" font-size="9.8" fill="#1a1a1a" stroke="#1a1a1a" stroke-width="0.32" textLength="12.7" lengthAdjust="spacingAndGlyphs" >C1</text>
<text transform="translate(575.8,491.2) scale(1,1.08)" font-size="9.8" fill="#1a1a1a" stroke="#1a1a1a" stroke-width="0.32" textLength="19.4" lengthAdjust="spacingAndGlyphs" >10p</text>
<text transform="translate(574.4,515.4) scale(1,1.08)" font-size="9.8" fill="#1a1a1a" stroke="#1a1a1a" stroke-width="0.32" textLength="13.4" lengthAdjust="spacingAndGlyphs" >R4</text>
<text transform="translate(574.4,541.6) scale(1,1.08)" font-size="9.8" fill="#1a1a1a" stroke="#1a1a1a" stroke-width="0.32" textLength="13.6" lengthAdjust="spacingAndGlyphs" >9K</text>
<text transform="translate(712.4,476.6) scale(1,1.08)" font-size="9.8" fill="#1a1a1a" stroke="#1a1a1a" stroke-width="0.32" textLength="13.1" lengthAdjust="spacingAndGlyphs" >R8</text>
<text transform="translate(712.4,492.7) scale(1,1.08)" font-size="9.8" fill="#1a1a1a" stroke="#1a1a1a" stroke-width="0.32" textLength="20.0" lengthAdjust="spacingAndGlyphs" >100</text>
<text transform="translate(630.6,516.1) scale(1,1.08)" font-size="9.8" fill="#1a1a1a" stroke="#1a1a1a" stroke-width="0.32" textLength="13.1" lengthAdjust="spacingAndGlyphs" >R5</text>
<text transform="translate(630.6,541.6) scale(1,1.08)" font-size="9.8" fill="#1a1a1a" stroke="#1a1a1a" stroke-width="0.32" textLength="13.1" lengthAdjust="spacingAndGlyphs" >1K</text>
<text transform="translate(698.8,519.9) scale(1,1.08)" font-size="9.8" fill="#1a1a1a" stroke="#1a1a1a" stroke-width="0.32" textLength="13.4" lengthAdjust="spacingAndGlyphs" >Q3</text>
<text transform="translate(698.8,536.5) scale(1,1.08)" font-size="9.8" fill="#1a1a1a" stroke="#1a1a1a" stroke-width="0.32" textLength="40.9" lengthAdjust="spacingAndGlyphs" >2N3906</text>
<text transform="translate(676.2,550.9) scale(1,1.08)" font-size="9.8" fill="#1a1a1a" stroke="#1a1a1a" stroke-width="0.32" textLength="13.5" lengthAdjust="spacingAndGlyphs" >C2</text>
<text transform="translate(670.0,576.0) scale(1,1.08)" font-size="9.8" fill="#1a1a1a" stroke="#1a1a1a" stroke-width="0.32" textLength="25.9" lengthAdjust="spacingAndGlyphs" >100p</text>
<text transform="translate(712.4,581.9) scale(1,1.08)" font-size="9.8" fill="#1a1a1a" stroke="#1a1a1a" stroke-width="0.32" textLength="12.8" lengthAdjust="spacingAndGlyphs" >R9</text>
<text transform="translate(712.4,597.0) scale(1,1.08)" font-size="9.8" fill="#1a1a1a" stroke="#1a1a1a" stroke-width="0.32" textLength="13.5" lengthAdjust="spacingAndGlyphs" >1k</text>
<text transform="translate(783.2,595.6) scale(1,1.08)" font-size="9.8" fill="#1a1a1a" stroke="#1a1a1a" stroke-width="0.32" textLength="14.5" lengthAdjust="spacingAndGlyphs" >Q4</text>
<text transform="translate(790.7,621.8) scale(1,1.08)" font-size="9.8" fill="#1a1a1a" stroke="#1a1a1a" stroke-width="0.32" textLength="40.7" lengthAdjust="spacingAndGlyphs" >2N3904</text>
<text transform="translate(819.6,602.8) scale(1,1.08)" font-size="9.8" fill="#1a1a1a" stroke="#1a1a1a" stroke-width="0.32" textLength="12.7" lengthAdjust="spacingAndGlyphs" >C3</text>
<text transform="translate(819.6,623.4) scale(1,1.08)" font-size="9.8" fill="#1a1a1a" stroke="#1a1a1a" stroke-width="0.32" textLength="29.0" lengthAdjust="spacingAndGlyphs" >.001µ</text>
<text transform="translate(712.4,665.9) scale(1,1.08)" font-size="9.8" fill="#1a1a1a" stroke="#1a1a1a" stroke-width="0.32" textLength="20.1" lengthAdjust="spacingAndGlyphs" >R10</text>
<text transform="translate(712.4,680.8) scale(1,1.08)" font-size="9.8" fill="#1a1a1a" stroke="#1a1a1a" stroke-width="0.32" textLength="13.6" lengthAdjust="spacingAndGlyphs" >1K</text>
<text transform="translate(873.5,469.8) scale(1,1.08)" font-size="9.8" fill="#1a1a1a" stroke="#1a1a1a" stroke-width="0.32" textLength="20.1" lengthAdjust="spacingAndGlyphs" >R17</text>
<text transform="translate(873.5,486.0) scale(1,1.08)" font-size="9.8" fill="#1a1a1a" stroke="#1a1a1a" stroke-width="0.32" textLength="13.2" lengthAdjust="spacingAndGlyphs" >1k</text>
<text transform="translate(942.9,510.8) scale(1,1.08)" font-size="9.8" fill="#1a1a1a" stroke="#1a1a1a" stroke-width="0.32" textLength="42.0" lengthAdjust="spacingAndGlyphs" >D45H11</text>
<text transform="translate(862.4,553.8) scale(1,1.08)" font-size="9.8" fill="#1a1a1a" stroke="#1a1a1a" stroke-width="0.32" textLength="14.4" lengthAdjust="spacingAndGlyphs" >Q5</text>
<text transform="translate(862.9,572.7) scale(1,1.08)" font-size="9.8" fill="#1a1a1a" stroke="#1a1a1a" stroke-width="0.32" textLength="40.7" lengthAdjust="spacingAndGlyphs" >2N3904</text>
<text transform="translate(939.9,558.8) scale(1,1.08)" font-size="9.8" fill="#1a1a1a" stroke="#1a1a1a" stroke-width="0.32" textLength="13.8" lengthAdjust="spacingAndGlyphs" >Q8</text>
<text transform="translate(936.3,623.8) scale(1,1.08)" font-size="9.8" fill="#1a1a1a" stroke="#1a1a1a" stroke-width="0.32" textLength="12.6" lengthAdjust="spacingAndGlyphs" >R1</text>
<text transform="translate(936.3,638.5) scale(1,1.08)" font-size="9.8" fill="#1a1a1a" stroke="#1a1a1a" stroke-width="0.32" textLength="15.7" lengthAdjust="spacingAndGlyphs" >0.1</text>
<text transform="translate(965.5,642.1) scale(1,1.08)" font-size="9.8" fill="#1a1a1a" stroke="#1a1a1a" stroke-width="0.32" textLength="20.6" lengthAdjust="spacingAndGlyphs" >OUT</text>
<text transform="translate(936.3,666.0) scale(1,1.08)" font-size="9.8" fill="#1a1a1a" stroke="#1a1a1a" stroke-width="0.32" textLength="19.4" lengthAdjust="spacingAndGlyphs" >R16</text>
<text transform="translate(936.3,680.3) scale(1,1.08)" font-size="9.8" fill="#1a1a1a" stroke="#1a1a1a" stroke-width="0.32" textLength="15.7" lengthAdjust="spacingAndGlyphs" >0.1</text>
<text transform="translate(879.8,701.2) scale(1,1.08)" font-size="9.8" fill="#1a1a1a" stroke="#1a1a1a" stroke-width="0.32" textLength="39.9" lengthAdjust="spacingAndGlyphs" >2N4403</text>
<text transform="translate(936.7,701.2) scale(1,1.08)" font-size="9.8" fill="#1a1a1a" stroke="#1a1a1a" stroke-width="0.32" textLength="13.7" lengthAdjust="spacingAndGlyphs" >Q7</text>
<text transform="translate(876.6,726.5) scale(1,1.08)" font-size="9.8" fill="#1a1a1a" stroke="#1a1a1a" stroke-width="0.32" textLength="13.4" lengthAdjust="spacingAndGlyphs" >Q6</text>
<text transform="translate(944.8,727.3) scale(1,1.08)" font-size="9.8" fill="#1a1a1a" stroke="#1a1a1a" stroke-width="0.32" textLength="53.5" lengthAdjust="spacingAndGlyphs" >2SCR542P</text>
<text transform="translate(873.5,749.2) scale(1,1.08)" font-size="9.8" fill="#1a1a1a" stroke="#1a1a1a" stroke-width="0.32" textLength="19.4" lengthAdjust="spacingAndGlyphs" >R12</text>
<text transform="translate(873.5,765.0) scale(1,1.08)" font-size="9.8" fill="#1a1a1a" stroke="#1a1a1a" stroke-width="0.32" textLength="12.9" lengthAdjust="spacingAndGlyphs" >1k</text>
<text transform="translate(368.3,634.4) scale(1,1.08)" font-size="9.8" fill="#1a1a1a" stroke="#1a1a1a" stroke-width="0.32" textLength="13.4" lengthAdjust="spacingAndGlyphs" >C4</text>
<text transform="translate(368.7,661.5) scale(1,1.08)" font-size="9.8" fill="#1a1a1a" stroke="#1a1a1a" stroke-width="0.32" textLength="12.0" lengthAdjust="spacingAndGlyphs" >1µ</text>
<text transform="translate(345.5,673.7) scale(1,1.08)" font-size="9.8" fill="#1a1a1a" stroke="#1a1a1a" stroke-width="0.32" textLength="12.8" lengthAdjust="spacingAndGlyphs" >V1</text>
<text transform="translate(367.4,686.1) scale(1,1.08)" font-size="9.8" fill="#1a1a1a" stroke="#1a1a1a" stroke-width="0.32" textLength="23.8" lengthAdjust="spacingAndGlyphs" >AC 1</text>
<text transform="translate(433.7,658.8) scale(1,1.08)" font-size="9.8" fill="#1a1a1a" stroke="#1a1a1a" stroke-width="0.32" textLength="20.4" lengthAdjust="spacingAndGlyphs" >R15</text>
<text transform="translate(433.7,673.7) scale(1,1.08)" font-size="9.8" fill="#1a1a1a" stroke="#1a1a1a" stroke-width="0.32" textLength="20.4" lengthAdjust="spacingAndGlyphs" >47k</text>
<text transform="translate(460.5,640.0) scale(1,1.08)" font-size="9.8" fill="#1a1a1a" stroke="#1a1a1a" stroke-width="0.32" textLength="13.7" lengthAdjust="spacingAndGlyphs" >Q1</text>
<text transform="translate(527.2,640.0) scale(1,1.08)" font-size="9.8" fill="#1a1a1a" stroke="#1a1a1a" stroke-width="0.32" textLength="14.2" lengthAdjust="spacingAndGlyphs" >Q2</text>
<text transform="translate(461.4,655.4) scale(1,1.08)" font-size="9.8" fill="#1a1a1a" stroke="#1a1a1a" stroke-width="0.32" textLength="81.3" lengthAdjust="spacingAndGlyphs" >2N39042N3904</text>
<text transform="translate(510.4,728.1) scale(1,1.08)" font-size="9.8" fill="#1a1a1a" stroke="#1a1a1a" stroke-width="0.32" textLength="12.7" lengthAdjust="spacingAndGlyphs" >R3</text>
<text transform="translate(510.4,744.0) scale(1,1.08)" font-size="9.8" fill="#1a1a1a" stroke="#1a1a1a" stroke-width="0.32" textLength="12.6" lengthAdjust="spacingAndGlyphs" >1K</text>
<text transform="translate(623.4,635.0) scale(1,1.08)" font-size="9.8" fill="#1a1a1a" stroke="#1a1a1a" stroke-width="0.32" textLength="13.8" lengthAdjust="spacingAndGlyphs" >R7</text>
<text transform="translate(620.3,661.3) scale(1,1.08)" font-size="9.8" fill="#1a1a1a" stroke="#1a1a1a" stroke-width="0.32" textLength="19.7" lengthAdjust="spacingAndGlyphs" >10k</text>
<text transform="translate(586.2,673.3) scale(1,1.08)" font-size="9.8" fill="#1a1a1a" stroke="#1a1a1a" stroke-width="0.32" textLength="13.8" lengthAdjust="spacingAndGlyphs" >R6</text>
<text transform="translate(586.2,688.2) scale(1,1.08)" font-size="9.8" fill="#1a1a1a" stroke="#1a1a1a" stroke-width="0.32" textLength="13.8" lengthAdjust="spacingAndGlyphs" >1k</text>
<text transform="translate(712.4,720.9) scale(1,1.08)" font-size="9.8" fill="#1a1a1a" stroke="#1a1a1a" stroke-width="0.32" textLength="19.7" lengthAdjust="spacingAndGlyphs" >R11</text>
<text transform="translate(712.4,737.0) scale(1,1.08)" font-size="9.8" fill="#1a1a1a" stroke="#1a1a1a" stroke-width="0.32" textLength="13.6" lengthAdjust="spacingAndGlyphs" >5K</text>
<text transform="translate(1049.1,484.2) scale(1,1.08)" font-size="9.8" fill="#1a1a1a" stroke="#1a1a1a" stroke-width="0.32" textLength="13.6" lengthAdjust="spacingAndGlyphs" >C6</text>
<text transform="translate(1049.1,504.5) scale(1,1.08)" font-size="9.8" fill="#1a1a1a" stroke="#1a1a1a" stroke-width="0.32" textLength="26.7" lengthAdjust="spacingAndGlyphs" >100µ</text>
<text transform="translate(1049.1,525.8) scale(1,1.08)" font-size="9.8" fill="#1a1a1a" stroke="#1a1a1a" stroke-width="0.32" textLength="13.6" lengthAdjust="spacingAndGlyphs" >C7</text>
<text transform="translate(1049.1,546.2) scale(1,1.08)" font-size="9.8" fill="#1a1a1a" stroke="#1a1a1a" stroke-width="0.32" textLength="26.7" lengthAdjust="spacingAndGlyphs" >100µ</text>
<text transform="translate(1027.7,595.8) scale(1,1.08)" font-size="9.8" fill="#1a1a1a" stroke="#1a1a1a" stroke-width="0.32" textLength="20.1" lengthAdjust="spacingAndGlyphs" >R14</text>
<text transform="translate(1027.7,610.5) scale(1,1.08)" font-size="9.8" fill="#1a1a1a" stroke="#1a1a1a" stroke-width="0.32" textLength="6.1" lengthAdjust="spacingAndGlyphs" >4</text>
<text transform="translate(1090.7,686.8) scale(1,1.08)" font-size="9.8" fill="#1a1a1a" stroke="#1a1a1a" stroke-width="0.32" textLength="19.9" lengthAdjust="spacingAndGlyphs" >R13</text>
<text transform="translate(1090.7,701.6) scale(1,1.08)" font-size="9.8" fill="#1a1a1a" stroke="#1a1a1a" stroke-width="0.32" textLength="19.7" lengthAdjust="spacingAndGlyphs" >200</text>
<text transform="translate(1084.3,713.7) scale(1,1.08)" font-size="9.8" fill="#1a1a1a" stroke="#1a1a1a" stroke-width="0.32" textLength="13.2" lengthAdjust="spacingAndGlyphs" >C5</text>
<text transform="translate(1085.2,735.0) scale(1,1.08)" font-size="9.8" fill="#1a1a1a" stroke="#1a1a1a" stroke-width="0.32" textLength="25.8" lengthAdjust="spacingAndGlyphs" >220n</text>
<text transform="translate(99.9,646.0) scale(1,1.08)" font-size="12.5" fill="#1a1a1a" stroke="#1a1a1a" stroke-width="0.12" textLength="132.1" lengthAdjust="spacingAndGlyphs" >БП , V1, V2 выход с</text>
<text transform="translate(103.5,664.0) scale(1,1.08)" font-size="12.5" fill="#1a1a1a" stroke="#1a1a1a" stroke-width="0.12" textLength="117.6" lengthAdjust="spacingAndGlyphs" >трансформатора</text>
<text transform="translate(100.8,684.0) scale(1,1.08)" font-size="12.5" fill="#1a1a1a" stroke="#1a1a1a" stroke-width="0.12" textLength="175.5" lengthAdjust="spacingAndGlyphs" >Напряжение пульсаций -</text>
<text transform="translate(95.3,703.0) scale(1,1.08)" font-size="12.5" fill="#1a1a1a" stroke="#1a1a1a" stroke-width="0.12" textLength="155.7" lengthAdjust="spacingAndGlyphs" >0.125в под нагрузкой.</text>
</svg></body></html>
